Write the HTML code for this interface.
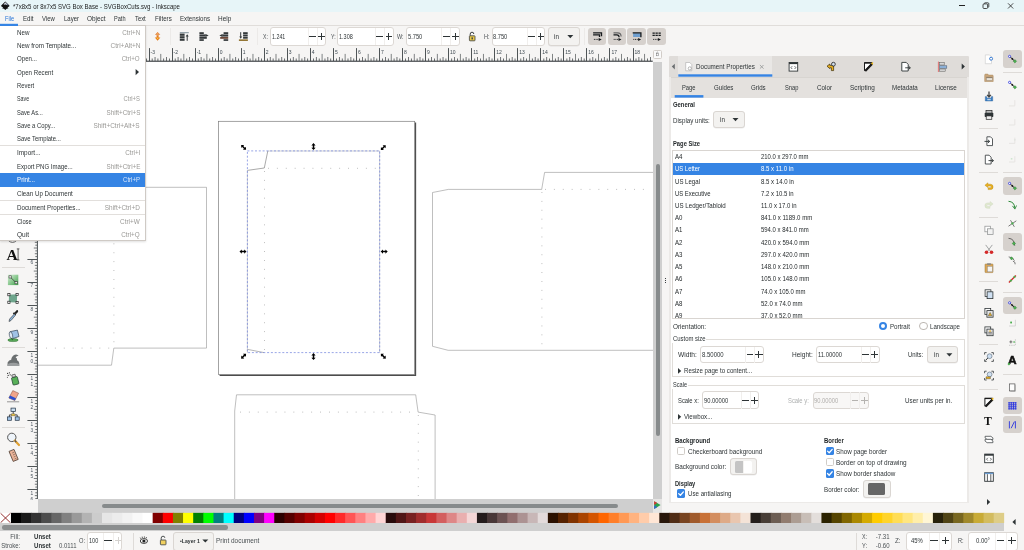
<!DOCTYPE html>
<html lang="en"><head><meta charset="utf-8"><title>Inkscape</title>
<style>
*{box-sizing:border-box;margin:0;padding:0}
html,body{width:1024px;height:550px;overflow:hidden}
body{position:relative;background:#f6f5f4;font-family:"Liberation Sans",sans-serif;font-size:6.4px;color:#2e3436}
div,span.t,svg{position:absolute}
span.t{white-space:nowrap;line-height:10px;height:10px;display:block}
.fld{background:#fff;border:0.6px solid #dcd8d4;border-radius:3px}
.btn{background:#f3f2f0;border:0.6px solid #dad6d2;border-radius:3px;box-shadow:0 0.5px 0.5px rgba(0,0,0,.08)}
.tog{background:#d6d1cd;border-radius:3px}
.hl{background:#3584e4}
#app{left:0;top:0;width:1024px;height:550px;overflow:hidden;will-change:transform}

</style></head>
<body>
<div id="app">
<div style="left:0.00px;top:0.00px;width:1024.00px;height:12.00px;background:#e7f5f8"></div>
<svg style="left:0px;top:1px" width="11" height="11" viewBox="0 0 11 11"><g transform="translate(0.900 0.300)"><path d="M4.4 0.1L8.5 4.2Q8.8 5 7.8 5.4L6.6 6 7.6 7 5.8 7.4 4.4 8.6 3 7.4 1.2 7 2.2 6 1 5.4Q0 5 0.3 4.2Z" fill="#111"/><path d="M4.4 0.9L6.6 3.1 5.6 3.6 4.8 3 4 3.7 3.2 3 2.4 3.4Z" fill="#cfd6e2"/><path d="M5.4 2L7.6 4.2 6.4 3.9Z" fill="#5f76a8"/></g></svg>
<span class="t" id="t0" style="top:1.80px;font-size:6.4px;color:#1c1c1c;left:12.70px;transform-origin:0 50%;transform:scaleX(0.9459);">*7x8x5 or 8x7x5 SVG Box Base - SVGBoxCuts.svg - Inkscape</span>
<div style="left:959.30px;top:5.00px;width:5.60px;height:1.00px;background:#222"></div>
<svg style="left:982px;top:2px" width="9" height="9" viewBox="0 0 9 9"><g transform="translate(0.500 0.300)"><rect x="0.5" y="1.6" width="4.6" height="4.6" rx="1" fill="none" stroke="#222" stroke-width="0.8"/><path d="M1.8 1.4V1.2Q1.8 0.5 2.6 0.5H5.4Q6.3 0.5 6.3 1.4V4.2Q6.3 5 5.4 5" fill="none" stroke="#222" stroke-width="0.8"/></g></svg>
<svg style="left:1007px;top:2px" width="8" height="8" viewBox="0 0 8 8"><g transform="translate(0.600 0.900)"><path d="M0.4 0.4L5.6 5.6M5.6 0.4L0.4 5.6" stroke="#222" stroke-width="0.8" fill="none"/></g></svg>
<div style="left:0.00px;top:12.00px;width:1024.00px;height:13.50px;background:#f6f5f4;border-bottom:0.7px solid #e0ddda"></div>
<span class="t" id="t1" style="top:14.30px;font-size:6.4px;color:#2a76d6;left:4.50px;transform-origin:0 50%;transform:scaleX(0.8970);">File</span>
<span class="t" id="t2" style="top:14.30px;font-size:6.4px;color:#2e3436;left:22.50px;transform-origin:0 50%;transform:scaleX(0.9532);">Edit</span>
<span class="t" id="t3" style="top:14.30px;font-size:6.4px;color:#2e3436;left:41.75px;transform-origin:0 50%;transform:scaleX(0.9273);">View</span>
<span class="t" id="t4" style="top:14.30px;font-size:6.4px;color:#2e3436;left:63.75px;transform-origin:0 50%;transform:scaleX(0.9375);">Layer</span>
<span class="t" id="t5" style="top:14.30px;font-size:6.4px;color:#2e3436;left:87.00px;transform-origin:0 50%;transform:scaleX(1.0008);">Object</span>
<span class="t" id="t6" style="top:14.30px;font-size:6.4px;color:#2e3436;left:114.25px;transform-origin:0 50%;transform:scaleX(0.8741);">Path</span>
<span class="t" id="t7" style="top:14.30px;font-size:6.4px;color:#2e3436;left:135.00px;transform-origin:0 50%;transform:scaleX(0.9161);">Text</span>
<span class="t" id="t8" style="top:14.30px;font-size:6.4px;color:#2e3436;left:154.50px;transform-origin:0 50%;transform:scaleX(0.9623);">Filters</span>
<span class="t" id="t9" style="top:14.30px;font-size:6.4px;color:#2e3436;left:179.50px;transform-origin:0 50%;transform:scaleX(0.9595);">Extensions</span>
<span class="t" id="t10" style="top:14.30px;font-size:6.4px;color:#2e3436;left:218.00px;transform-origin:0 50%;transform:scaleX(1.0071);">Help</span>
<svg style="left:154px;top:32px" width="8" height="10" viewBox="0 0 8 10"><g transform="translate(0.700 0.100)"><path d="M2.9 0.2L5 2.4H3.7V3.6H2.1V2.4H0.8Z" fill="#f0a060" stroke="#d8701c" stroke-width="0.5"/><path d="M2.9 8.6L0.1 5.4H1.9V3.8H3.9V5.4H5.7Z" fill="#e67a1c"/><circle cx="2.9" cy="6.2" r="0.8" fill="#f7d23a"/></g></svg>
<div style="left:170.00px;top:28.00px;width:1.00px;height:17.00px;background:#eceae8"></div>
<svg style="left:179px;top:32px" width="12" height="11" viewBox="0 0 12 11"><g transform="translate(0.800 0.200)"><rect x="0" y="0" width="9" height="1" fill="#7e8f9a"/><rect x="0" y="1.4" width="4.8" height="2.2" fill="#33383a"/><rect x="0" y="4" width="4.8" height="2.1" fill="#33383a"/><rect x="0" y="6.5" width="4.8" height="2.1" fill="#33383a"/><path d="M7.4 8.6V3.2" stroke="#33383a" stroke-width="1"/><path d="M5.9 4.4L7.4 2 8.9 4.4Z" fill="#33383a"/></g></svg>
<svg style="left:199px;top:32px" width="11" height="11" viewBox="0 0 11 11"><g transform="translate(0.400 0.200)"><rect x="0" y="0" width="4.4" height="1.8" fill="#33383a"/><rect x="0" y="2.2" width="6.4" height="2.2" fill="#33383a"/><rect x="0" y="4.8" width="7.4" height="1.8" fill="#33383a"/><rect x="0" y="7" width="4.4" height="1.7" fill="#33383a"/><path d="M6.2 1.8L9.2 3.3 6.2 4.8Z" fill="#33383a"/></g></svg>
<svg style="left:219px;top:32px" width="11" height="11" viewBox="0 0 11 11"><g transform="translate(0.400 0.200)"><rect x="4.2" y="0" width="4.6" height="1.8" fill="#33383a"/><rect x="2.8" y="2.2" width="6" height="2.2" fill="#33383a"/><rect x="0.8" y="4.8" width="8" height="1.8" fill="#6b4636"/><rect x="4.2" y="7" width="4.6" height="1.7" fill="#33383a"/><path d="M3 1.8L0 3.3 3 4.8Z" fill="#33383a"/></g></svg>
<svg style="left:238px;top:32px" width="12" height="11" viewBox="0 0 12 11"><g transform="translate(0.900 0.200)"><rect x="4.2" y="0" width="4.6" height="1.9" fill="#33383a"/><rect x="4.2" y="2.3" width="4.6" height="1.9" fill="#33383a"/><rect x="4.2" y="4.6" width="4.6" height="1.9" fill="#33383a"/><rect x="0" y="7.2" width="9" height="1.5" fill="#8a6a22"/><path d="M1.8 0V5" stroke="#33383a" stroke-width="1"/><path d="M0.4 4.2L1.8 6.6 3.2 4.2Z" fill="#33383a"/></g></svg>
<div style="left:257.00px;top:28.00px;width:1.00px;height:17.00px;background:#eceae8"></div>
<span class="t" id="t11" style="top:32.10px;font-size:6.4px;color:#4c5255;left:262.80px;transform-origin:0 50%;transform:scaleX(0.8000);">X:</span>
<div class="fld" style="left:270.20px;top:27.40px;width:56.20px;height:18.20px;"></div><span class="t" id="t12" style="top:32.00px;font-size:6.4px;color:#2e3436;left:271.90px;transform-origin:0 50%;transform:scaleX(0.8313);">1.241</span><div style="left:308.00px;top:28.00px;width:1.00px;height:17.00px;background:#f1efed"></div><div style="left:317.00px;top:28.00px;width:1.00px;height:17.00px;background:#f1efed"></div><div style="left:309.00px;top:36.00px;width:7.00px;height:1.00px;background:#2e3436"></div><div style="left:318.30px;top:36.00px;width:6.50px;height:1.00px;background:#2e3436"></div><div style="left:321.00px;top:33.25px;width:1.00px;height:6.50px;background:#2e3436"></div>
<span class="t" id="t13" style="top:32.10px;font-size:6.4px;color:#4c5255;left:330.50px;transform-origin:0 50%;transform:scaleX(0.8088);">Y:</span>
<div class="fld" style="left:337.30px;top:27.40px;width:56.30px;height:18.20px;"></div><span class="t" id="t14" style="top:32.00px;font-size:6.4px;color:#2e3436;left:339.20px;transform-origin:0 50%;transform:scaleX(0.8625);">1.308</span><div style="left:375.00px;top:28.00px;width:1.00px;height:17.00px;background:#f1efed"></div><div style="left:384.00px;top:28.00px;width:1.00px;height:17.00px;background:#f1efed"></div><div style="left:376.30px;top:36.00px;width:6.90px;height:1.00px;background:#2e3436"></div><div style="left:385.50px;top:36.00px;width:6.50px;height:1.00px;background:#2e3436"></div><div style="left:388.00px;top:33.25px;width:1.00px;height:6.50px;background:#2e3436"></div>
<span class="t" id="t15" style="top:32.10px;font-size:6.4px;color:#4c5255;left:397.30px;transform-origin:0 50%;transform:scaleX(0.8568);">W:</span>
<div class="fld" style="left:406.40px;top:27.40px;width:53.20px;height:18.20px;"></div><span class="t" id="t16" style="top:32.00px;font-size:6.4px;color:#2e3436;left:408.00px;transform-origin:0 50%;transform:scaleX(0.8875);">5.750</span><div style="left:441.00px;top:28.00px;width:1.00px;height:17.00px;background:#f1efed"></div><div style="left:450.00px;top:28.00px;width:1.00px;height:17.00px;background:#f1efed"></div><div style="left:442.50px;top:36.00px;width:7.10px;height:1.00px;background:#2e3436"></div><div style="left:452.00px;top:36.00px;width:6.60px;height:1.00px;background:#2e3436"></div><div style="left:455.00px;top:33.20px;width:1.00px;height:6.60px;background:#2e3436"></div>
<svg style="left:468px;top:31px" width="9" height="12" viewBox="0 0 9 12"><g transform="translate(0.600 0.600)"><path d="M1.6 4.2V2.6Q1.6 0.6 3.4 0.6Q5.2 0.6 5.2 2.4" fill="none" stroke="#3a3f41" stroke-width="1"/><rect x="0.8" y="4.2" width="5.6" height="5" rx="0.6" fill="#e9c84a" stroke="#3a3f41" stroke-width="0.8"/><rect x="2.9" y="5.8" width="1.4" height="2" fill="#3a3f41"/></g></svg>
<span class="t" id="t17" style="top:32.10px;font-size:6.4px;color:#4c5255;left:483.80px;transform-origin:0 50%;transform:scaleX(0.8741);">H:</span>
<div class="fld" style="left:491.60px;top:27.40px;width:53.80px;height:18.20px;"></div><span class="t" id="t18" style="top:32.00px;font-size:6.4px;color:#2e3436;left:493.20px;transform-origin:0 50%;transform:scaleX(0.8875);">8.750</span><div style="left:527.00px;top:28.00px;width:1.00px;height:17.00px;background:#f1efed"></div><div style="left:536.00px;top:28.00px;width:1.00px;height:17.00px;background:#f1efed"></div><div style="left:528.30px;top:36.00px;width:6.90px;height:1.00px;background:#2e3436"></div><div style="left:537.60px;top:36.00px;width:6.60px;height:1.00px;background:#2e3436"></div><div style="left:540.00px;top:33.20px;width:1.00px;height:6.60px;background:#2e3436"></div>
<div class="btn" style="left:548.00px;top:27.40px;width:31.60px;height:18.20px;"></div><span class="t" id="t19" style="top:32.00px;font-size:6.4px;color:#2e3436;left:554.20px;transform-origin:0 50%;transform:scaleX(0.9700);">in</span><svg style="left:567px;top:35px" width="8" height="5" viewBox="0 0 8 5"><g transform="translate(0.300 0.100)"><path d="M0 0H6L3.0 3.2Z" fill="#2e3436"/></g></svg>
<div style="left:584.00px;top:28.00px;width:1.00px;height:17.00px;background:#eceae8"></div>
<div class="tog" style="left:588.00px;top:27.80px;width:18.40px;height:17.70px;"></div>
<svg style="left:593px;top:32px" width="11" height="11" viewBox="0 0 11 11"><g transform="translate(0.100 0.200)"><path d="M0 0.7H8.4V4M0 2.7H6.4V4.8" fill="none" stroke="#15191b" stroke-width="1.3"/><path d="M0.8 7.2H6" stroke="#15191b" stroke-width="0.9" stroke-dasharray="1 0.7"/><path d="M5.6 5.7L8.6 7.2 5.6 8.7Z" fill="#15191b"/></g></svg>
<div class="tog" style="left:607.80px;top:27.80px;width:18.30px;height:17.70px;"></div>
<svg style="left:612px;top:32px" width="11" height="11" viewBox="0 0 11 11"><g transform="translate(0.900 0.200)"><path d="M0.6 0.7H4.6Q8.2 0.7 8.2 4.4" fill="none" stroke="#666" stroke-width="1.2"/><path d="M0.6 2.7H4Q6.2 2.7 6.2 5" fill="none" stroke="#15191b" stroke-width="1.2"/><path d="M0.8 7.2H6" stroke="#15191b" stroke-width="0.9" stroke-dasharray="1 0.7"/><path d="M5.6 5.7L8.6 7.2 5.6 8.7Z" fill="#15191b"/></g></svg>
<div class="tog" style="left:627.40px;top:27.80px;width:18.50px;height:17.70px;"></div>
<svg style="left:632px;top:32px" width="11" height="11" viewBox="0 0 11 11"><g transform="translate(0.500 0.200)"><rect x="0.6" y="1" width="7.6" height="3.8" fill="#6f9fd0"/><path d="M0.2 0.7H8.4V5" fill="none" stroke="#15191b" stroke-width="1.3"/><path d="M0.8 7.2H6" stroke="#15191b" stroke-width="0.9" stroke-dasharray="1 0.7"/><path d="M5.6 5.7L8.6 7.2 5.6 8.7Z" fill="#15191b"/></g></svg>
<div class="tog" style="left:647.20px;top:27.80px;width:18.60px;height:17.70px;"></div>
<svg style="left:652px;top:32px" width="11" height="11" viewBox="0 0 11 11"><g transform="translate(0.300 0.200)"><path d="M0.2 0.9H8.8M0.2 3.2H8.8" stroke="#15191b" stroke-width="1.4" stroke-dasharray="2.3 0.7"/><path d="M0.8 7.2H6" stroke="#15191b" stroke-width="0.9" stroke-dasharray="1 0.7"/><path d="M5.6 5.7L8.6 7.2 5.6 8.7Z" fill="#15191b"/></g></svg>
<div style="left:38.00px;top:61.60px;width:615.20px;height:437.40px;background:#fff"></div>
<svg style="left:24px;top:47px" width="631" height="16" viewBox="0 0 631 16"><g transform="translate(0.500 0.500)"><rect x="14.94" y="9.50" width="0.8" height="4.1" fill="#3d4346" opacity="0.9"/><rect x="17.82" y="11.00" width="0.8" height="2.6" fill="#3d4346" opacity="0.95"/><rect x="20.70" y="6.40" width="0.8" height="7.2" fill="#3d4346" opacity="0.8"/><rect x="23.58" y="11.00" width="0.8" height="2.6" fill="#3d4346" opacity="0.95"/><rect x="26.46" y="9.50" width="0.8" height="4.1" fill="#3d4346" opacity="0.9"/><rect x="29.34" y="11.00" width="0.8" height="2.6" fill="#3d4346" opacity="0.95"/><rect x="32.55" y="0.60" width="0.9" height="13.0" fill="#3d4346" opacity="1"/><rect x="35.10" y="11.00" width="0.8" height="2.6" fill="#3d4346" opacity="0.95"/><rect x="37.98" y="9.50" width="0.8" height="4.1" fill="#3d4346" opacity="0.9"/><rect x="40.86" y="11.00" width="0.8" height="2.6" fill="#3d4346" opacity="0.95"/><rect x="43.74" y="6.40" width="0.8" height="7.2" fill="#3d4346" opacity="0.8"/><rect x="46.62" y="11.00" width="0.8" height="2.6" fill="#3d4346" opacity="0.95"/><rect x="49.50" y="9.50" width="0.8" height="4.1" fill="#3d4346" opacity="0.9"/><rect x="52.38" y="11.00" width="0.8" height="2.6" fill="#3d4346" opacity="0.95"/><rect x="55.55" y="0.60" width="0.9" height="13.0" fill="#3d4346" opacity="1"/><rect x="58.14" y="11.00" width="0.8" height="2.6" fill="#3d4346" opacity="0.95"/><rect x="61.02" y="9.50" width="0.8" height="4.1" fill="#3d4346" opacity="0.9"/><rect x="63.90" y="11.00" width="0.8" height="2.6" fill="#3d4346" opacity="0.95"/><rect x="66.78" y="6.40" width="0.8" height="7.2" fill="#3d4346" opacity="0.8"/><rect x="69.66" y="11.00" width="0.8" height="2.6" fill="#3d4346" opacity="0.95"/><rect x="72.54" y="9.50" width="0.8" height="4.1" fill="#3d4346" opacity="0.9"/><rect x="75.42" y="11.00" width="0.8" height="2.6" fill="#3d4346" opacity="0.95"/><rect x="78.55" y="0.60" width="0.9" height="13.0" fill="#3d4346" opacity="1"/><rect x="81.18" y="11.00" width="0.8" height="2.6" fill="#3d4346" opacity="0.95"/><rect x="84.06" y="9.50" width="0.8" height="4.1" fill="#3d4346" opacity="0.9"/><rect x="86.94" y="11.00" width="0.8" height="2.6" fill="#3d4346" opacity="0.95"/><rect x="89.82" y="6.40" width="0.8" height="7.2" fill="#3d4346" opacity="0.8"/><rect x="92.70" y="11.00" width="0.8" height="2.6" fill="#3d4346" opacity="0.95"/><rect x="95.58" y="9.50" width="0.8" height="4.1" fill="#3d4346" opacity="0.9"/><rect x="98.46" y="11.00" width="0.8" height="2.6" fill="#3d4346" opacity="0.95"/><rect x="101.55" y="0.60" width="0.9" height="13.0" fill="#3d4346" opacity="1"/><rect x="104.22" y="11.00" width="0.8" height="2.6" fill="#3d4346" opacity="0.95"/><rect x="107.10" y="9.50" width="0.8" height="4.1" fill="#3d4346" opacity="0.9"/><rect x="109.98" y="11.00" width="0.8" height="2.6" fill="#3d4346" opacity="0.95"/><rect x="112.86" y="6.40" width="0.8" height="7.2" fill="#3d4346" opacity="0.8"/><rect x="115.74" y="11.00" width="0.8" height="2.6" fill="#3d4346" opacity="0.95"/><rect x="118.62" y="9.50" width="0.8" height="4.1" fill="#3d4346" opacity="0.9"/><rect x="121.50" y="11.00" width="0.8" height="2.6" fill="#3d4346" opacity="0.95"/><rect x="124.55" y="0.60" width="0.9" height="13.0" fill="#3d4346" opacity="1"/><rect x="127.26" y="11.00" width="0.8" height="2.6" fill="#3d4346" opacity="0.95"/><rect x="130.14" y="9.50" width="0.8" height="4.1" fill="#3d4346" opacity="0.9"/><rect x="133.02" y="11.00" width="0.8" height="2.6" fill="#3d4346" opacity="0.95"/><rect x="135.90" y="6.40" width="0.8" height="7.2" fill="#3d4346" opacity="0.8"/><rect x="138.78" y="11.00" width="0.8" height="2.6" fill="#3d4346" opacity="0.95"/><rect x="141.66" y="9.50" width="0.8" height="4.1" fill="#3d4346" opacity="0.9"/><rect x="144.54" y="11.00" width="0.8" height="2.6" fill="#3d4346" opacity="0.95"/><rect x="147.55" y="0.60" width="0.9" height="13.0" fill="#3d4346" opacity="1"/><rect x="150.30" y="11.00" width="0.8" height="2.6" fill="#3d4346" opacity="0.95"/><rect x="153.18" y="9.50" width="0.8" height="4.1" fill="#3d4346" opacity="0.9"/><rect x="156.06" y="11.00" width="0.8" height="2.6" fill="#3d4346" opacity="0.95"/><rect x="158.94" y="6.40" width="0.8" height="7.2" fill="#3d4346" opacity="0.8"/><rect x="161.82" y="11.00" width="0.8" height="2.6" fill="#3d4346" opacity="0.95"/><rect x="164.70" y="9.50" width="0.8" height="4.1" fill="#3d4346" opacity="0.9"/><rect x="167.58" y="11.00" width="0.8" height="2.6" fill="#3d4346" opacity="0.95"/><rect x="170.55" y="0.60" width="0.9" height="13.0" fill="#3d4346" opacity="1"/><rect x="173.34" y="11.00" width="0.8" height="2.6" fill="#3d4346" opacity="0.95"/><rect x="176.22" y="9.50" width="0.8" height="4.1" fill="#3d4346" opacity="0.9"/><rect x="179.10" y="11.00" width="0.8" height="2.6" fill="#3d4346" opacity="0.95"/><rect x="181.98" y="6.40" width="0.8" height="7.2" fill="#3d4346" opacity="0.8"/><rect x="184.86" y="11.00" width="0.8" height="2.6" fill="#3d4346" opacity="0.95"/><rect x="187.74" y="9.50" width="0.8" height="4.1" fill="#3d4346" opacity="0.9"/><rect x="190.62" y="11.00" width="0.8" height="2.6" fill="#3d4346" opacity="0.95"/><rect x="193.55" y="0.60" width="0.9" height="13.0" fill="#3d4346" opacity="1"/><rect x="196.38" y="11.00" width="0.8" height="2.6" fill="#3d4346" opacity="0.95"/><rect x="199.26" y="9.50" width="0.8" height="4.1" fill="#3d4346" opacity="0.9"/><rect x="202.14" y="11.00" width="0.8" height="2.6" fill="#3d4346" opacity="0.95"/><rect x="205.02" y="6.40" width="0.8" height="7.2" fill="#3d4346" opacity="0.8"/><rect x="207.90" y="11.00" width="0.8" height="2.6" fill="#3d4346" opacity="0.95"/><rect x="210.78" y="9.50" width="0.8" height="4.1" fill="#3d4346" opacity="0.9"/><rect x="213.66" y="11.00" width="0.8" height="2.6" fill="#3d4346" opacity="0.95"/><rect x="216.55" y="0.60" width="0.9" height="13.0" fill="#3d4346" opacity="1"/><rect x="219.42" y="11.00" width="0.8" height="2.6" fill="#3d4346" opacity="0.95"/><rect x="222.30" y="9.50" width="0.8" height="4.1" fill="#3d4346" opacity="0.9"/><rect x="225.18" y="11.00" width="0.8" height="2.6" fill="#3d4346" opacity="0.95"/><rect x="228.06" y="6.40" width="0.8" height="7.2" fill="#3d4346" opacity="0.8"/><rect x="230.94" y="11.00" width="0.8" height="2.6" fill="#3d4346" opacity="0.95"/><rect x="233.82" y="9.50" width="0.8" height="4.1" fill="#3d4346" opacity="0.9"/><rect x="236.70" y="11.00" width="0.8" height="2.6" fill="#3d4346" opacity="0.95"/><rect x="239.55" y="0.60" width="0.9" height="13.0" fill="#3d4346" opacity="1"/><rect x="242.46" y="11.00" width="0.8" height="2.6" fill="#3d4346" opacity="0.95"/><rect x="245.34" y="9.50" width="0.8" height="4.1" fill="#3d4346" opacity="0.9"/><rect x="248.22" y="11.00" width="0.8" height="2.6" fill="#3d4346" opacity="0.95"/><rect x="251.10" y="6.40" width="0.8" height="7.2" fill="#3d4346" opacity="0.8"/><rect x="253.98" y="11.00" width="0.8" height="2.6" fill="#3d4346" opacity="0.95"/><rect x="256.86" y="9.50" width="0.8" height="4.1" fill="#3d4346" opacity="0.9"/><rect x="259.74" y="11.00" width="0.8" height="2.6" fill="#3d4346" opacity="0.95"/><rect x="262.55" y="0.60" width="0.9" height="13.0" fill="#3d4346" opacity="1"/><rect x="265.50" y="11.00" width="0.8" height="2.6" fill="#3d4346" opacity="0.95"/><rect x="268.38" y="9.50" width="0.8" height="4.1" fill="#3d4346" opacity="0.9"/><rect x="271.26" y="11.00" width="0.8" height="2.6" fill="#3d4346" opacity="0.95"/><rect x="274.14" y="6.40" width="0.8" height="7.2" fill="#3d4346" opacity="0.8"/><rect x="277.02" y="11.00" width="0.8" height="2.6" fill="#3d4346" opacity="0.95"/><rect x="279.90" y="9.50" width="0.8" height="4.1" fill="#3d4346" opacity="0.9"/><rect x="282.78" y="11.00" width="0.8" height="2.6" fill="#3d4346" opacity="0.95"/><rect x="285.55" y="0.60" width="0.9" height="13.0" fill="#3d4346" opacity="1"/><rect x="288.54" y="11.00" width="0.8" height="2.6" fill="#3d4346" opacity="0.95"/><rect x="291.42" y="9.50" width="0.8" height="4.1" fill="#3d4346" opacity="0.9"/><rect x="294.30" y="11.00" width="0.8" height="2.6" fill="#3d4346" opacity="0.95"/><rect x="297.18" y="6.40" width="0.8" height="7.2" fill="#3d4346" opacity="0.8"/><rect x="300.06" y="11.00" width="0.8" height="2.6" fill="#3d4346" opacity="0.95"/><rect x="302.94" y="9.50" width="0.8" height="4.1" fill="#3d4346" opacity="0.9"/><rect x="305.82" y="11.00" width="0.8" height="2.6" fill="#3d4346" opacity="0.95"/><rect x="308.55" y="0.60" width="0.9" height="13.0" fill="#3d4346" opacity="1"/><rect x="311.58" y="11.00" width="0.8" height="2.6" fill="#3d4346" opacity="0.95"/><rect x="314.46" y="9.50" width="0.8" height="4.1" fill="#3d4346" opacity="0.9"/><rect x="317.34" y="11.00" width="0.8" height="2.6" fill="#3d4346" opacity="0.95"/><rect x="320.22" y="6.40" width="0.8" height="7.2" fill="#3d4346" opacity="0.8"/><rect x="323.10" y="11.00" width="0.8" height="2.6" fill="#3d4346" opacity="0.95"/><rect x="325.98" y="9.50" width="0.8" height="4.1" fill="#3d4346" opacity="0.9"/><rect x="328.86" y="11.00" width="0.8" height="2.6" fill="#3d4346" opacity="0.95"/><rect x="331.55" y="0.60" width="0.9" height="13.0" fill="#3d4346" opacity="1"/><rect x="334.62" y="11.00" width="0.8" height="2.6" fill="#3d4346" opacity="0.95"/><rect x="337.50" y="9.50" width="0.8" height="4.1" fill="#3d4346" opacity="0.9"/><rect x="340.38" y="11.00" width="0.8" height="2.6" fill="#3d4346" opacity="0.95"/><rect x="343.26" y="6.40" width="0.8" height="7.2" fill="#3d4346" opacity="0.8"/><rect x="346.14" y="11.00" width="0.8" height="2.6" fill="#3d4346" opacity="0.95"/><rect x="349.02" y="9.50" width="0.8" height="4.1" fill="#3d4346" opacity="0.9"/><rect x="351.90" y="11.00" width="0.8" height="2.6" fill="#3d4346" opacity="0.95"/><rect x="354.55" y="0.60" width="0.9" height="13.0" fill="#3d4346" opacity="1"/><rect x="357.66" y="11.00" width="0.8" height="2.6" fill="#3d4346" opacity="0.95"/><rect x="360.54" y="9.50" width="0.8" height="4.1" fill="#3d4346" opacity="0.9"/><rect x="363.42" y="11.00" width="0.8" height="2.6" fill="#3d4346" opacity="0.95"/><rect x="366.30" y="6.40" width="0.8" height="7.2" fill="#3d4346" opacity="0.8"/><rect x="369.18" y="11.00" width="0.8" height="2.6" fill="#3d4346" opacity="0.95"/><rect x="372.06" y="9.50" width="0.8" height="4.1" fill="#3d4346" opacity="0.9"/><rect x="374.94" y="11.00" width="0.8" height="2.6" fill="#3d4346" opacity="0.95"/><rect x="377.55" y="0.60" width="0.9" height="13.0" fill="#3d4346" opacity="1"/><rect x="380.70" y="11.00" width="0.8" height="2.6" fill="#3d4346" opacity="0.95"/><rect x="383.58" y="9.50" width="0.8" height="4.1" fill="#3d4346" opacity="0.9"/><rect x="386.46" y="11.00" width="0.8" height="2.6" fill="#3d4346" opacity="0.95"/><rect x="389.34" y="6.40" width="0.8" height="7.2" fill="#3d4346" opacity="0.8"/><rect x="392.22" y="11.00" width="0.8" height="2.6" fill="#3d4346" opacity="0.95"/><rect x="395.10" y="9.50" width="0.8" height="4.1" fill="#3d4346" opacity="0.9"/><rect x="397.98" y="11.00" width="0.8" height="2.6" fill="#3d4346" opacity="0.95"/><rect x="400.55" y="0.60" width="0.9" height="13.0" fill="#3d4346" opacity="1"/><rect x="403.74" y="11.00" width="0.8" height="2.6" fill="#3d4346" opacity="0.95"/><rect x="406.62" y="9.50" width="0.8" height="4.1" fill="#3d4346" opacity="0.9"/><rect x="409.50" y="11.00" width="0.8" height="2.6" fill="#3d4346" opacity="0.95"/><rect x="412.38" y="6.40" width="0.8" height="7.2" fill="#3d4346" opacity="0.8"/><rect x="415.26" y="11.00" width="0.8" height="2.6" fill="#3d4346" opacity="0.95"/><rect x="418.14" y="9.50" width="0.8" height="4.1" fill="#3d4346" opacity="0.9"/><rect x="421.02" y="11.00" width="0.8" height="2.6" fill="#3d4346" opacity="0.95"/><rect x="423.55" y="0.60" width="0.9" height="13.0" fill="#3d4346" opacity="1"/><rect x="426.78" y="11.00" width="0.8" height="2.6" fill="#3d4346" opacity="0.95"/><rect x="429.66" y="9.50" width="0.8" height="4.1" fill="#3d4346" opacity="0.9"/><rect x="432.54" y="11.00" width="0.8" height="2.6" fill="#3d4346" opacity="0.95"/><rect x="435.42" y="6.40" width="0.8" height="7.2" fill="#3d4346" opacity="0.8"/><rect x="438.30" y="11.00" width="0.8" height="2.6" fill="#3d4346" opacity="0.95"/><rect x="441.18" y="9.50" width="0.8" height="4.1" fill="#3d4346" opacity="0.9"/><rect x="444.06" y="11.00" width="0.8" height="2.6" fill="#3d4346" opacity="0.95"/><rect x="446.55" y="0.60" width="0.9" height="13.0" fill="#3d4346" opacity="1"/><rect x="449.82" y="11.00" width="0.8" height="2.6" fill="#3d4346" opacity="0.95"/><rect x="452.70" y="9.50" width="0.8" height="4.1" fill="#3d4346" opacity="0.9"/><rect x="455.58" y="11.00" width="0.8" height="2.6" fill="#3d4346" opacity="0.95"/><rect x="458.46" y="6.40" width="0.8" height="7.2" fill="#3d4346" opacity="0.8"/><rect x="461.34" y="11.00" width="0.8" height="2.6" fill="#3d4346" opacity="0.95"/><rect x="464.22" y="9.50" width="0.8" height="4.1" fill="#3d4346" opacity="0.9"/><rect x="467.10" y="11.00" width="0.8" height="2.6" fill="#3d4346" opacity="0.95"/><rect x="469.55" y="0.60" width="0.9" height="13.0" fill="#3d4346" opacity="1"/><rect x="472.86" y="11.00" width="0.8" height="2.6" fill="#3d4346" opacity="0.95"/><rect x="475.74" y="9.50" width="0.8" height="4.1" fill="#3d4346" opacity="0.9"/><rect x="478.62" y="11.00" width="0.8" height="2.6" fill="#3d4346" opacity="0.95"/><rect x="481.50" y="6.40" width="0.8" height="7.2" fill="#3d4346" opacity="0.8"/><rect x="484.38" y="11.00" width="0.8" height="2.6" fill="#3d4346" opacity="0.95"/><rect x="487.26" y="9.50" width="0.8" height="4.1" fill="#3d4346" opacity="0.9"/><rect x="490.14" y="11.00" width="0.8" height="2.6" fill="#3d4346" opacity="0.95"/><rect x="492.55" y="0.60" width="0.9" height="13.0" fill="#3d4346" opacity="1"/><rect x="495.90" y="11.00" width="0.8" height="2.6" fill="#3d4346" opacity="0.95"/><rect x="498.78" y="9.50" width="0.8" height="4.1" fill="#3d4346" opacity="0.9"/><rect x="501.66" y="11.00" width="0.8" height="2.6" fill="#3d4346" opacity="0.95"/><rect x="504.54" y="6.40" width="0.8" height="7.2" fill="#3d4346" opacity="0.8"/><rect x="507.42" y="11.00" width="0.8" height="2.6" fill="#3d4346" opacity="0.95"/><rect x="510.30" y="9.50" width="0.8" height="4.1" fill="#3d4346" opacity="0.9"/><rect x="513.18" y="11.00" width="0.8" height="2.6" fill="#3d4346" opacity="0.95"/><rect x="515.55" y="0.60" width="0.9" height="13.0" fill="#3d4346" opacity="1"/><rect x="518.94" y="11.00" width="0.8" height="2.6" fill="#3d4346" opacity="0.95"/><rect x="521.82" y="9.50" width="0.8" height="4.1" fill="#3d4346" opacity="0.9"/><rect x="524.70" y="11.00" width="0.8" height="2.6" fill="#3d4346" opacity="0.95"/><rect x="527.58" y="6.40" width="0.8" height="7.2" fill="#3d4346" opacity="0.8"/><rect x="530.46" y="11.00" width="0.8" height="2.6" fill="#3d4346" opacity="0.95"/><rect x="533.34" y="9.50" width="0.8" height="4.1" fill="#3d4346" opacity="0.9"/><rect x="536.22" y="11.00" width="0.8" height="2.6" fill="#3d4346" opacity="0.95"/><rect x="538.55" y="0.60" width="0.9" height="13.0" fill="#3d4346" opacity="1"/><rect x="541.98" y="11.00" width="0.8" height="2.6" fill="#3d4346" opacity="0.95"/><rect x="544.86" y="9.50" width="0.8" height="4.1" fill="#3d4346" opacity="0.9"/><rect x="547.74" y="11.00" width="0.8" height="2.6" fill="#3d4346" opacity="0.95"/><rect x="550.62" y="6.40" width="0.8" height="7.2" fill="#3d4346" opacity="0.8"/><rect x="553.50" y="11.00" width="0.8" height="2.6" fill="#3d4346" opacity="0.95"/><rect x="556.38" y="9.50" width="0.8" height="4.1" fill="#3d4346" opacity="0.9"/><rect x="559.26" y="11.00" width="0.8" height="2.6" fill="#3d4346" opacity="0.95"/><rect x="561.55" y="0.60" width="0.9" height="13.0" fill="#3d4346" opacity="1"/><rect x="565.02" y="11.00" width="0.8" height="2.6" fill="#3d4346" opacity="0.95"/><rect x="567.90" y="9.50" width="0.8" height="4.1" fill="#3d4346" opacity="0.9"/><rect x="570.78" y="11.00" width="0.8" height="2.6" fill="#3d4346" opacity="0.95"/><rect x="573.66" y="6.40" width="0.8" height="7.2" fill="#3d4346" opacity="0.8"/><rect x="576.54" y="11.00" width="0.8" height="2.6" fill="#3d4346" opacity="0.95"/><rect x="579.42" y="9.50" width="0.8" height="4.1" fill="#3d4346" opacity="0.9"/><rect x="582.30" y="11.00" width="0.8" height="2.6" fill="#3d4346" opacity="0.95"/><rect x="584.55" y="0.60" width="0.9" height="13.0" fill="#3d4346" opacity="1"/><rect x="588.06" y="11.00" width="0.8" height="2.6" fill="#3d4346" opacity="0.95"/><rect x="590.94" y="9.50" width="0.8" height="4.1" fill="#3d4346" opacity="0.9"/><rect x="593.82" y="11.00" width="0.8" height="2.6" fill="#3d4346" opacity="0.95"/><rect x="596.70" y="6.40" width="0.8" height="7.2" fill="#3d4346" opacity="0.8"/><rect x="599.58" y="11.00" width="0.8" height="2.6" fill="#3d4346" opacity="0.95"/><rect x="602.46" y="9.50" width="0.8" height="4.1" fill="#3d4346" opacity="0.9"/><rect x="605.34" y="11.00" width="0.8" height="2.6" fill="#3d4346" opacity="0.95"/><rect x="608.55" y="0.60" width="0.9" height="13.0" fill="#3d4346" opacity="1"/><rect x="611.10" y="11.00" width="0.8" height="2.6" fill="#3d4346" opacity="0.95"/><rect x="613.98" y="9.50" width="0.8" height="4.1" fill="#3d4346" opacity="0.9"/><rect x="616.86" y="11.00" width="0.8" height="2.6" fill="#3d4346" opacity="0.95"/><rect x="619.74" y="6.40" width="0.8" height="7.2" fill="#3d4346" opacity="0.8"/><rect x="622.62" y="11.00" width="0.8" height="2.6" fill="#3d4346" opacity="0.95"/><rect x="625.50" y="9.50" width="0.8" height="4.1" fill="#3d4346" opacity="0.9"/><rect x="13.50" y="13.15" width="614.70" height="1.15" fill="#3d4346"/><text x="33.92" y="6.3" font-size="5" fill="#3f4a52" font-family="Liberation Sans, sans-serif">-7</text><text x="56.96" y="6.3" font-size="5" fill="#3f4a52" font-family="Liberation Sans, sans-serif">-6</text><text x="80.00" y="6.3" font-size="5" fill="#3f4a52" font-family="Liberation Sans, sans-serif">-5</text><text x="103.04" y="6.3" font-size="5" fill="#3f4a52" font-family="Liberation Sans, sans-serif">-4</text><text x="126.08" y="6.3" font-size="5" fill="#3f4a52" font-family="Liberation Sans, sans-serif">-3</text><text x="149.12" y="6.3" font-size="5" fill="#3f4a52" font-family="Liberation Sans, sans-serif">-2</text><text x="172.16" y="6.3" font-size="5" fill="#3f4a52" font-family="Liberation Sans, sans-serif">-1</text><text x="195.20" y="6.3" font-size="5" fill="#3f4a52" font-family="Liberation Sans, sans-serif">0</text><text x="218.24" y="6.3" font-size="5" fill="#3f4a52" font-family="Liberation Sans, sans-serif">1</text><text x="241.28" y="6.3" font-size="5" fill="#3f4a52" font-family="Liberation Sans, sans-serif">2</text><text x="264.32" y="6.3" font-size="5" fill="#3f4a52" font-family="Liberation Sans, sans-serif">3</text><text x="287.36" y="6.3" font-size="5" fill="#3f4a52" font-family="Liberation Sans, sans-serif">4</text><text x="310.40" y="6.3" font-size="5" fill="#3f4a52" font-family="Liberation Sans, sans-serif">5</text><text x="333.44" y="6.3" font-size="5" fill="#3f4a52" font-family="Liberation Sans, sans-serif">6</text><text x="356.48" y="6.3" font-size="5" fill="#3f4a52" font-family="Liberation Sans, sans-serif">7</text><text x="379.52" y="6.3" font-size="5" fill="#3f4a52" font-family="Liberation Sans, sans-serif">8</text><text x="402.56" y="6.3" font-size="5" fill="#3f4a52" font-family="Liberation Sans, sans-serif">9</text><text x="425.60" y="6.3" font-size="5" fill="#3f4a52" font-family="Liberation Sans, sans-serif">10</text><text x="448.64" y="6.3" font-size="5" fill="#3f4a52" font-family="Liberation Sans, sans-serif">11</text><text x="471.68" y="6.3" font-size="5" fill="#3f4a52" font-family="Liberation Sans, sans-serif">12</text><text x="494.72" y="6.3" font-size="5" fill="#3f4a52" font-family="Liberation Sans, sans-serif">13</text><text x="517.76" y="6.3" font-size="5" fill="#3f4a52" font-family="Liberation Sans, sans-serif">14</text><text x="540.80" y="6.3" font-size="5" fill="#3f4a52" font-family="Liberation Sans, sans-serif">15</text><text x="563.84" y="6.3" font-size="5" fill="#3f4a52" font-family="Liberation Sans, sans-serif">16</text><text x="586.88" y="6.3" font-size="5" fill="#3f4a52" font-family="Liberation Sans, sans-serif">17</text><text x="609.92" y="6.3" font-size="5" fill="#3f4a52" font-family="Liberation Sans, sans-serif">18</text></g></svg>
<svg style="left:24px;top:61px" width="15" height="439" viewBox="0 0 15 439"><g transform="translate(0.000 0.600)"><rect x="9.80" y="1.70" width="3.2" height="0.8" fill="#3d4346" opacity="0.85"/><rect x="11.30" y="4.58" width="1.7" height="0.8" fill="#3d4346" opacity="0.9"/><rect x="10.80" y="7.46" width="2.2" height="0.8" fill="#3d4346" opacity="0.9"/><rect x="11.30" y="10.34" width="1.7" height="0.8" fill="#3d4346" opacity="0.9"/><rect x="3.40" y="13.45" width="9.6" height="0.9" fill="#3d4346" opacity="1"/><rect x="11.30" y="16.10" width="1.7" height="0.8" fill="#3d4346" opacity="0.9"/><rect x="10.80" y="18.98" width="2.2" height="0.8" fill="#3d4346" opacity="0.9"/><rect x="11.30" y="21.86" width="1.7" height="0.8" fill="#3d4346" opacity="0.9"/><rect x="9.80" y="24.74" width="3.2" height="0.8" fill="#3d4346" opacity="0.85"/><rect x="11.30" y="27.62" width="1.7" height="0.8" fill="#3d4346" opacity="0.9"/><rect x="10.80" y="30.50" width="2.2" height="0.8" fill="#3d4346" opacity="0.9"/><rect x="11.30" y="33.38" width="1.7" height="0.8" fill="#3d4346" opacity="0.9"/><rect x="3.40" y="36.45" width="9.6" height="0.9" fill="#3d4346" opacity="1"/><rect x="11.30" y="39.14" width="1.7" height="0.8" fill="#3d4346" opacity="0.9"/><rect x="10.80" y="42.02" width="2.2" height="0.8" fill="#3d4346" opacity="0.9"/><rect x="11.30" y="44.90" width="1.7" height="0.8" fill="#3d4346" opacity="0.9"/><rect x="9.80" y="47.78" width="3.2" height="0.8" fill="#3d4346" opacity="0.85"/><rect x="11.30" y="50.66" width="1.7" height="0.8" fill="#3d4346" opacity="0.9"/><rect x="10.80" y="53.54" width="2.2" height="0.8" fill="#3d4346" opacity="0.9"/><rect x="11.30" y="56.42" width="1.7" height="0.8" fill="#3d4346" opacity="0.9"/><rect x="3.40" y="59.45" width="9.6" height="0.9" fill="#3d4346" opacity="1"/><rect x="11.30" y="62.18" width="1.7" height="0.8" fill="#3d4346" opacity="0.9"/><rect x="10.80" y="65.06" width="2.2" height="0.8" fill="#3d4346" opacity="0.9"/><rect x="11.30" y="67.94" width="1.7" height="0.8" fill="#3d4346" opacity="0.9"/><rect x="9.80" y="70.82" width="3.2" height="0.8" fill="#3d4346" opacity="0.85"/><rect x="11.30" y="73.70" width="1.7" height="0.8" fill="#3d4346" opacity="0.9"/><rect x="10.80" y="76.58" width="2.2" height="0.8" fill="#3d4346" opacity="0.9"/><rect x="11.30" y="79.46" width="1.7" height="0.8" fill="#3d4346" opacity="0.9"/><rect x="3.40" y="82.45" width="9.6" height="0.9" fill="#3d4346" opacity="1"/><rect x="11.30" y="85.22" width="1.7" height="0.8" fill="#3d4346" opacity="0.9"/><rect x="10.80" y="88.10" width="2.2" height="0.8" fill="#3d4346" opacity="0.9"/><rect x="11.30" y="90.98" width="1.7" height="0.8" fill="#3d4346" opacity="0.9"/><rect x="9.80" y="93.86" width="3.2" height="0.8" fill="#3d4346" opacity="0.85"/><rect x="11.30" y="96.74" width="1.7" height="0.8" fill="#3d4346" opacity="0.9"/><rect x="10.80" y="99.62" width="2.2" height="0.8" fill="#3d4346" opacity="0.9"/><rect x="11.30" y="102.50" width="1.7" height="0.8" fill="#3d4346" opacity="0.9"/><rect x="3.40" y="105.45" width="9.6" height="0.9" fill="#3d4346" opacity="1"/><rect x="11.30" y="108.26" width="1.7" height="0.8" fill="#3d4346" opacity="0.9"/><rect x="10.80" y="111.14" width="2.2" height="0.8" fill="#3d4346" opacity="0.9"/><rect x="11.30" y="114.02" width="1.7" height="0.8" fill="#3d4346" opacity="0.9"/><rect x="9.80" y="116.90" width="3.2" height="0.8" fill="#3d4346" opacity="0.85"/><rect x="11.30" y="119.78" width="1.7" height="0.8" fill="#3d4346" opacity="0.9"/><rect x="10.80" y="122.66" width="2.2" height="0.8" fill="#3d4346" opacity="0.9"/><rect x="11.30" y="125.54" width="1.7" height="0.8" fill="#3d4346" opacity="0.9"/><rect x="3.40" y="128.45" width="9.6" height="0.9" fill="#3d4346" opacity="1"/><rect x="11.30" y="131.30" width="1.7" height="0.8" fill="#3d4346" opacity="0.9"/><rect x="10.80" y="134.18" width="2.2" height="0.8" fill="#3d4346" opacity="0.9"/><rect x="11.30" y="137.06" width="1.7" height="0.8" fill="#3d4346" opacity="0.9"/><rect x="9.80" y="139.94" width="3.2" height="0.8" fill="#3d4346" opacity="0.85"/><rect x="11.30" y="142.82" width="1.7" height="0.8" fill="#3d4346" opacity="0.9"/><rect x="10.80" y="145.70" width="2.2" height="0.8" fill="#3d4346" opacity="0.9"/><rect x="11.30" y="148.58" width="1.7" height="0.8" fill="#3d4346" opacity="0.9"/><rect x="3.40" y="151.45" width="9.6" height="0.9" fill="#3d4346" opacity="1"/><rect x="11.30" y="154.34" width="1.7" height="0.8" fill="#3d4346" opacity="0.9"/><rect x="10.80" y="157.22" width="2.2" height="0.8" fill="#3d4346" opacity="0.9"/><rect x="11.30" y="160.10" width="1.7" height="0.8" fill="#3d4346" opacity="0.9"/><rect x="9.80" y="162.98" width="3.2" height="0.8" fill="#3d4346" opacity="0.85"/><rect x="11.30" y="165.86" width="1.7" height="0.8" fill="#3d4346" opacity="0.9"/><rect x="10.80" y="168.74" width="2.2" height="0.8" fill="#3d4346" opacity="0.9"/><rect x="11.30" y="171.62" width="1.7" height="0.8" fill="#3d4346" opacity="0.9"/><rect x="3.40" y="174.45" width="9.6" height="0.9" fill="#3d4346" opacity="1"/><rect x="11.30" y="177.38" width="1.7" height="0.8" fill="#3d4346" opacity="0.9"/><rect x="10.80" y="180.26" width="2.2" height="0.8" fill="#3d4346" opacity="0.9"/><rect x="11.30" y="183.14" width="1.7" height="0.8" fill="#3d4346" opacity="0.9"/><rect x="9.80" y="186.02" width="3.2" height="0.8" fill="#3d4346" opacity="0.85"/><rect x="11.30" y="188.90" width="1.7" height="0.8" fill="#3d4346" opacity="0.9"/><rect x="10.80" y="191.78" width="2.2" height="0.8" fill="#3d4346" opacity="0.9"/><rect x="11.30" y="194.66" width="1.7" height="0.8" fill="#3d4346" opacity="0.9"/><rect x="3.40" y="197.45" width="9.6" height="0.9" fill="#3d4346" opacity="1"/><rect x="11.30" y="200.42" width="1.7" height="0.8" fill="#3d4346" opacity="0.9"/><rect x="10.80" y="203.30" width="2.2" height="0.8" fill="#3d4346" opacity="0.9"/><rect x="11.30" y="206.18" width="1.7" height="0.8" fill="#3d4346" opacity="0.9"/><rect x="9.80" y="209.06" width="3.2" height="0.8" fill="#3d4346" opacity="0.85"/><rect x="11.30" y="211.94" width="1.7" height="0.8" fill="#3d4346" opacity="0.9"/><rect x="10.80" y="214.82" width="2.2" height="0.8" fill="#3d4346" opacity="0.9"/><rect x="11.30" y="217.70" width="1.7" height="0.8" fill="#3d4346" opacity="0.9"/><rect x="3.40" y="220.45" width="9.6" height="0.9" fill="#3d4346" opacity="1"/><rect x="11.30" y="223.46" width="1.7" height="0.8" fill="#3d4346" opacity="0.9"/><rect x="10.80" y="226.34" width="2.2" height="0.8" fill="#3d4346" opacity="0.9"/><rect x="11.30" y="229.22" width="1.7" height="0.8" fill="#3d4346" opacity="0.9"/><rect x="9.80" y="232.10" width="3.2" height="0.8" fill="#3d4346" opacity="0.85"/><rect x="11.30" y="234.98" width="1.7" height="0.8" fill="#3d4346" opacity="0.9"/><rect x="10.80" y="237.86" width="2.2" height="0.8" fill="#3d4346" opacity="0.9"/><rect x="11.30" y="240.74" width="1.7" height="0.8" fill="#3d4346" opacity="0.9"/><rect x="3.40" y="243.45" width="9.6" height="0.9" fill="#3d4346" opacity="1"/><rect x="11.30" y="246.50" width="1.7" height="0.8" fill="#3d4346" opacity="0.9"/><rect x="10.80" y="249.38" width="2.2" height="0.8" fill="#3d4346" opacity="0.9"/><rect x="11.30" y="252.26" width="1.7" height="0.8" fill="#3d4346" opacity="0.9"/><rect x="9.80" y="255.14" width="3.2" height="0.8" fill="#3d4346" opacity="0.85"/><rect x="11.30" y="258.02" width="1.7" height="0.8" fill="#3d4346" opacity="0.9"/><rect x="10.80" y="260.90" width="2.2" height="0.8" fill="#3d4346" opacity="0.9"/><rect x="11.30" y="263.78" width="1.7" height="0.8" fill="#3d4346" opacity="0.9"/><rect x="3.40" y="266.45" width="9.6" height="0.9" fill="#3d4346" opacity="1"/><rect x="11.30" y="269.54" width="1.7" height="0.8" fill="#3d4346" opacity="0.9"/><rect x="10.80" y="272.42" width="2.2" height="0.8" fill="#3d4346" opacity="0.9"/><rect x="11.30" y="275.30" width="1.7" height="0.8" fill="#3d4346" opacity="0.9"/><rect x="9.80" y="278.18" width="3.2" height="0.8" fill="#3d4346" opacity="0.85"/><rect x="11.30" y="281.06" width="1.7" height="0.8" fill="#3d4346" opacity="0.9"/><rect x="10.80" y="283.94" width="2.2" height="0.8" fill="#3d4346" opacity="0.9"/><rect x="11.30" y="286.82" width="1.7" height="0.8" fill="#3d4346" opacity="0.9"/><rect x="3.40" y="289.45" width="9.6" height="0.9" fill="#3d4346" opacity="1"/><rect x="11.30" y="292.58" width="1.7" height="0.8" fill="#3d4346" opacity="0.9"/><rect x="10.80" y="295.46" width="2.2" height="0.8" fill="#3d4346" opacity="0.9"/><rect x="11.30" y="298.34" width="1.7" height="0.8" fill="#3d4346" opacity="0.9"/><rect x="9.80" y="301.22" width="3.2" height="0.8" fill="#3d4346" opacity="0.85"/><rect x="11.30" y="304.10" width="1.7" height="0.8" fill="#3d4346" opacity="0.9"/><rect x="10.80" y="306.98" width="2.2" height="0.8" fill="#3d4346" opacity="0.9"/><rect x="11.30" y="309.86" width="1.7" height="0.8" fill="#3d4346" opacity="0.9"/><rect x="3.40" y="312.45" width="9.6" height="0.9" fill="#3d4346" opacity="1"/><rect x="11.30" y="315.62" width="1.7" height="0.8" fill="#3d4346" opacity="0.9"/><rect x="10.80" y="318.50" width="2.2" height="0.8" fill="#3d4346" opacity="0.9"/><rect x="11.30" y="321.38" width="1.7" height="0.8" fill="#3d4346" opacity="0.9"/><rect x="9.80" y="324.26" width="3.2" height="0.8" fill="#3d4346" opacity="0.85"/><rect x="11.30" y="327.14" width="1.7" height="0.8" fill="#3d4346" opacity="0.9"/><rect x="10.80" y="330.02" width="2.2" height="0.8" fill="#3d4346" opacity="0.9"/><rect x="11.30" y="332.90" width="1.7" height="0.8" fill="#3d4346" opacity="0.9"/><rect x="3.40" y="335.45" width="9.6" height="0.9" fill="#3d4346" opacity="1"/><rect x="11.30" y="338.66" width="1.7" height="0.8" fill="#3d4346" opacity="0.9"/><rect x="10.80" y="341.54" width="2.2" height="0.8" fill="#3d4346" opacity="0.9"/><rect x="11.30" y="344.42" width="1.7" height="0.8" fill="#3d4346" opacity="0.9"/><rect x="9.80" y="347.30" width="3.2" height="0.8" fill="#3d4346" opacity="0.85"/><rect x="11.30" y="350.18" width="1.7" height="0.8" fill="#3d4346" opacity="0.9"/><rect x="10.80" y="353.06" width="2.2" height="0.8" fill="#3d4346" opacity="0.9"/><rect x="11.30" y="355.94" width="1.7" height="0.8" fill="#3d4346" opacity="0.9"/><rect x="3.40" y="358.45" width="9.6" height="0.9" fill="#3d4346" opacity="1"/><rect x="11.30" y="361.70" width="1.7" height="0.8" fill="#3d4346" opacity="0.9"/><rect x="10.80" y="364.58" width="2.2" height="0.8" fill="#3d4346" opacity="0.9"/><rect x="11.30" y="367.46" width="1.7" height="0.8" fill="#3d4346" opacity="0.9"/><rect x="9.80" y="370.34" width="3.2" height="0.8" fill="#3d4346" opacity="0.85"/><rect x="11.30" y="373.22" width="1.7" height="0.8" fill="#3d4346" opacity="0.9"/><rect x="10.80" y="376.10" width="2.2" height="0.8" fill="#3d4346" opacity="0.9"/><rect x="11.30" y="378.98" width="1.7" height="0.8" fill="#3d4346" opacity="0.9"/><rect x="3.40" y="381.45" width="9.6" height="0.9" fill="#3d4346" opacity="1"/><rect x="11.30" y="384.74" width="1.7" height="0.8" fill="#3d4346" opacity="0.9"/><rect x="10.80" y="387.62" width="2.2" height="0.8" fill="#3d4346" opacity="0.9"/><rect x="11.30" y="390.50" width="1.7" height="0.8" fill="#3d4346" opacity="0.9"/><rect x="9.80" y="393.38" width="3.2" height="0.8" fill="#3d4346" opacity="0.85"/><rect x="11.30" y="396.26" width="1.7" height="0.8" fill="#3d4346" opacity="0.9"/><rect x="10.80" y="399.14" width="2.2" height="0.8" fill="#3d4346" opacity="0.9"/><rect x="11.30" y="402.02" width="1.7" height="0.8" fill="#3d4346" opacity="0.9"/><rect x="3.40" y="404.45" width="9.6" height="0.9" fill="#3d4346" opacity="1"/><rect x="11.30" y="407.78" width="1.7" height="0.8" fill="#3d4346" opacity="0.9"/><rect x="10.80" y="410.66" width="2.2" height="0.8" fill="#3d4346" opacity="0.9"/><rect x="11.30" y="413.54" width="1.7" height="0.8" fill="#3d4346" opacity="0.9"/><rect x="9.80" y="416.42" width="3.2" height="0.8" fill="#3d4346" opacity="0.85"/><rect x="11.30" y="419.30" width="1.7" height="0.8" fill="#3d4346" opacity="0.9"/><rect x="10.80" y="422.18" width="2.2" height="0.8" fill="#3d4346" opacity="0.9"/><rect x="11.30" y="425.06" width="1.7" height="0.8" fill="#3d4346" opacity="0.9"/><rect x="3.40" y="427.45" width="9.6" height="0.9" fill="#3d4346" opacity="1"/><rect x="11.30" y="430.82" width="1.7" height="0.8" fill="#3d4346" opacity="0.9"/><rect x="10.80" y="433.70" width="2.2" height="0.8" fill="#3d4346" opacity="0.9"/><rect x="11.30" y="436.58" width="1.7" height="0.8" fill="#3d4346" opacity="0.9"/><rect x="12.9" y="0" width="1.0" height="437.40" fill="#4a5053"/><text x="6.6" y="18.52" font-size="4.8" fill="#4a5560" font-family="Liberation Sans, sans-serif">-</text><text x="6.6" y="24.52" font-size="4.8" fill="#4a5560" font-family="Liberation Sans, sans-serif">2</text><text x="6.6" y="41.56" font-size="4.8" fill="#4a5560" font-family="Liberation Sans, sans-serif">-</text><text x="6.6" y="47.56" font-size="4.8" fill="#4a5560" font-family="Liberation Sans, sans-serif">1</text><text x="6.6" y="64.60" font-size="4.8" fill="#4a5560" font-family="Liberation Sans, sans-serif">0</text><text x="6.6" y="87.64" font-size="4.8" fill="#4a5560" font-family="Liberation Sans, sans-serif">1</text><text x="6.6" y="110.68" font-size="4.8" fill="#4a5560" font-family="Liberation Sans, sans-serif">2</text><text x="6.6" y="133.72" font-size="4.8" fill="#4a5560" font-family="Liberation Sans, sans-serif">3</text><text x="6.6" y="156.76" font-size="4.8" fill="#4a5560" font-family="Liberation Sans, sans-serif">4</text><text x="6.6" y="179.80" font-size="4.8" fill="#4a5560" font-family="Liberation Sans, sans-serif">5</text><text x="6.6" y="202.84" font-size="4.8" fill="#4a5560" font-family="Liberation Sans, sans-serif">6</text><text x="6.6" y="225.88" font-size="4.8" fill="#4a5560" font-family="Liberation Sans, sans-serif">7</text><text x="6.6" y="248.92" font-size="4.8" fill="#4a5560" font-family="Liberation Sans, sans-serif">8</text><text x="6.6" y="271.96" font-size="4.8" fill="#4a5560" font-family="Liberation Sans, sans-serif">9</text><text x="6.6" y="295.00" font-size="4.8" fill="#4a5560" font-family="Liberation Sans, sans-serif">1</text><text x="6.6" y="301.00" font-size="4.8" fill="#4a5560" font-family="Liberation Sans, sans-serif">0</text><text x="6.6" y="318.04" font-size="4.8" fill="#4a5560" font-family="Liberation Sans, sans-serif">1</text><text x="6.6" y="324.04" font-size="4.8" fill="#4a5560" font-family="Liberation Sans, sans-serif">1</text><text x="6.6" y="341.08" font-size="4.8" fill="#4a5560" font-family="Liberation Sans, sans-serif">1</text><text x="6.6" y="347.08" font-size="4.8" fill="#4a5560" font-family="Liberation Sans, sans-serif">2</text><text x="6.6" y="364.12" font-size="4.8" fill="#4a5560" font-family="Liberation Sans, sans-serif">1</text><text x="6.6" y="370.12" font-size="4.8" fill="#4a5560" font-family="Liberation Sans, sans-serif">3</text><text x="6.6" y="387.16" font-size="4.8" fill="#4a5560" font-family="Liberation Sans, sans-serif">1</text><text x="6.6" y="393.16" font-size="4.8" fill="#4a5560" font-family="Liberation Sans, sans-serif">4</text><text x="6.6" y="410.20" font-size="4.8" fill="#4a5560" font-family="Liberation Sans, sans-serif">1</text><text x="6.6" y="416.20" font-size="4.8" fill="#4a5560" font-family="Liberation Sans, sans-serif">5</text><text x="6.6" y="433.24" font-size="4.8" fill="#4a5560" font-family="Liberation Sans, sans-serif">1</text><text x="6.6" y="439.24" font-size="4.8" fill="#4a5560" font-family="Liberation Sans, sans-serif">6</text></g></svg>
<svg style="left:0;top:0" width="1024" height="550" viewBox="0 0 1024 550"><defs><clipPath id="cv"><rect x="38.0" y="62.2" width="615.2" height="436.79999999999995"/></clipPath></defs><g clip-path="url(#cv)"><rect x="218.9" y="121.8" width="196.6" height="253.6" fill="none" stroke="#555" stroke-width="0.9" opacity="0"/><path d="M415.2 122.6V375.1H219.6" stroke="#4d4d4d" stroke-width="1.9" fill="none"/><rect x="218.4" y="121.3" width="196.3" height="253.2" fill="#fff" stroke="#7d7d7d" stroke-width="0.7"/><path d="M38 187.3H206.5V348.1H113.8L111.5 365.2H38" stroke="#8a8a8a" stroke-width="0.55" fill="none"/><path d="M113.9 190V348" stroke="#9a9a9a" stroke-width="0.7" fill="none" stroke-dasharray="0.9 8.0"/><path d="M46 348.1H113" stroke="#9a9a9a" stroke-width="0.7" fill="none" stroke-dasharray="0.9 8.0"/><path d="M653 172.4H544.6L541.7 189.4H448.4L432.5 192.5V346.3L448.1 350.3H653" stroke="#8a8a8a" stroke-width="0.55" fill="none"/><path d="M545 189.4H650" stroke="#9a9a9a" stroke-width="0.7" fill="none" stroke-dasharray="0.9 8.0"/><path d="M541.9 192V347" stroke="#9a9a9a" stroke-width="0.7" fill="none" stroke-dasharray="0.9 8.0"/><path d="M234.7 499V411L236.5 394.8H415.7L418.1 412.1L435.1 415V499" stroke="#8a8a8a" stroke-width="0.55" fill="none"/><path d="M240 412.1H418" stroke="#9a9a9a" stroke-width="0.7" fill="none" stroke-dasharray="0.9 8.0"/><path d="M418.3 415V499" stroke="#9a9a9a" stroke-width="0.7" fill="none" stroke-dasharray="0.9 8.0"/><path d="M247.4 353V170.4M267.8 151H379.6V353" stroke="#aaa" stroke-width="0.5" fill="none"/><path d="M247.4 170.4L264.3 168L267.8 151" stroke="#707070" stroke-width="0.6" fill="none"/><path d="M247.6 349.4L264 352.6" stroke="#777" stroke-width="0.55" fill="none"/><path d="M268 168.3H379" stroke="#9a9a9a" stroke-width="0.7" fill="none" stroke-dasharray="0.9 8.0"/><path d="M264.5 171V350" stroke="#9a9a9a" stroke-width="0.7" fill="none" stroke-dasharray="0.9 8.0"/><rect x="247.4" y="150.9" width="132.3" height="201.7" fill="none" stroke="#6d80dc" stroke-width="0.7" stroke-dasharray="2 1.8"/><g transform="translate(243.6 147.4) rotate(45)"><path d="M-3.5 0L-1.2 -2.1V-0.75H1.2V-2.1L3.5 0 1.2 2.1V0.75H-1.2V2.1Z" fill="#000"/></g><g transform="translate(313.5 146.6) rotate(90)"><path d="M-3.5 0L-1.2 -2.1V-0.75H1.2V-2.1L3.5 0 1.2 2.1V0.75H-1.2V2.1Z" fill="#000"/></g><g transform="translate(383.3 147.6) rotate(-45)"><path d="M-3.5 0L-1.2 -2.1V-0.75H1.2V-2.1L3.5 0 1.2 2.1V0.75H-1.2V2.1Z" fill="#000"/></g><g transform="translate(243.0 251.6) rotate(0)"><path d="M-3.5 0L-1.2 -2.1V-0.75H1.2V-2.1L3.5 0 1.2 2.1V0.75H-1.2V2.1Z" fill="#000"/></g><g transform="translate(384.2 251.6) rotate(0)"><path d="M-3.5 0L-1.2 -2.1V-0.75H1.2V-2.1L3.5 0 1.2 2.1V0.75H-1.2V2.1Z" fill="#000"/></g><g transform="translate(243.6 356.2) rotate(-45)"><path d="M-3.5 0L-1.2 -2.1V-0.75H1.2V-2.1L3.5 0 1.2 2.1V0.75H-1.2V2.1Z" fill="#000"/></g><g transform="translate(313.5 356.6) rotate(90)"><path d="M-3.5 0L-1.2 -2.1V-0.75H1.2V-2.1L3.5 0 1.2 2.1V0.75H-1.2V2.1Z" fill="#000"/></g><g transform="translate(383.3 356.2) rotate(45)"><path d="M-3.5 0L-1.2 -2.1V-0.75H1.2V-2.1L3.5 0 1.2 2.1V0.75H-1.2V2.1Z" fill="#000"/></g></g></svg>
<div style="left:653.20px;top:61.60px;width:8.70px;height:437.70px;background:#cfcfcf"></div>
<div style="left:655.70px;top:164.20px;width:4.20px;height:272.30px;background:#878b8c;border-radius:2.1px"></div>
<div style="left:653.20px;top:49.60px;width:8.70px;height:9.00px;background:#fafafa;border:0.6px solid #d2cdc8;border-radius:1.5px"></div>
<svg style="left:656px;top:51px" width="4" height="7" viewBox="0 0 4 7"><g transform="translate(0.000 0.600)"><rect x="0.4" y="1.8" width="2.2" height="2.4" fill="none" stroke="#777" stroke-width="0.5"/><path d="M0.8 1.8V1Q0.8 0.4 1.5 0.4Q2.2 0.4 2.2 1" stroke="#777" stroke-width="0.5" fill="none"/></g></svg>
<div style="left:38.00px;top:499.00px;width:623.70px;height:13.60px;background:#cfcfcf"></div>
<div style="left:101.50px;top:503.50px;width:516.40px;height:4.50px;background:#878b8c;border-radius:2.2px"></div>
<div style="left:653.20px;top:499.30px;width:8.70px;height:13.60px;background:#e6e5e4"></div>
<svg style="left:653px;top:500px" width="10" height="11" viewBox="0 0 10 11"><g transform="translate(0.600 0.600)"><path d="M0.6 0.6L7 4.4 0.6 8.4Z" fill="#2aa34a"/><path d="M0.6 0.6L3.6 2.4 0.6 4.4Z" fill="#d33"/><path d="M0.6 4.6L3.8 6.4 0.6 8.4Z" fill="#36c"/></g></svg>
<div style="left:664.60px;top:277.60px;width:1.10px;height:1.10px;background:#3a3f41"></div>
<div style="left:664.60px;top:279.60px;width:1.10px;height:1.10px;background:#3a3f41"></div>
<div style="left:664.60px;top:281.60px;width:1.10px;height:1.10px;background:#3a3f41"></div>
<div style="left:0.00px;top:25.60px;width:24.00px;height:487.00px;background:#f6f5f4"></div>
<div style="left:24.00px;top:47.50px;width:14.00px;height:14.10px;background:#f6f5f4"></div>
<span class="t" id="t20" style="top:250.10px;font-size:15.5px;color:#111;font-weight:bold;left:6.60px;transform-origin:0 50%;transform:scaleX(1.0000);font-family:'Liberation Serif',serif;line-height:14px;height:14px;margin-top:-2.6px;">A</span>
<svg style="left:16px;top:248px" width="5" height="14" viewBox="0 0 5 14"><g transform="translate(0.600 0.600)"><path d="M0.2 0.3H2.8M0.2 11.3H2.8M1.5 0.3V11.3" stroke="#222" stroke-width="0.7"/></g></svg>
<svg style="left:8px;top:240px" width="10" height="5" viewBox="0 0 10 5"><g transform="translate(0.000 0.600)"><path d="M0.5 0Q4.5 3.6 8.5 0" stroke="#555" stroke-width="0.9" fill="none"/></g></svg>
<div style="left:2.00px;top:267.00px;width:22.60px;height:1.00px;background:#dedbd8"></div>
<svg style="left:7px;top:274px" width="13" height="13" viewBox="0 0 13 13"><g transform="translate(0.600 0.400)"><defs><linearGradient id="gg" x1="0" y1="0" x2="1" y2="1"><stop offset="0" stop-color="#d9f0d9"/><stop offset="1" stop-color="#3fa24a"/></linearGradient></defs><rect x="0.3" y="0.3" width="10.4" height="10.4" fill="url(#gg)"/><path d="M2.6 2.6L8.6 8.4" stroke="#333" stroke-width="0.7"/><rect x="1.4" y="1.4" width="2.2" height="2.2" fill="#fff" stroke="#333" stroke-width="0.6"/><rect x="7.4" y="7.2" width="2.2" height="2.2" fill="#fff" stroke="#333" stroke-width="0.6"/></g></svg>
<svg style="left:7px;top:293px" width="13" height="12" viewBox="0 0 13 12"><g transform="translate(0.400 0.000)"><path d="M1.6 1.8L9.8 1.2 9.4 9.6 1.4 9.2Z" fill="#6fa58c"/><g fill="#fff" stroke="#222" stroke-width="0.7"><rect x="0.4" y="0.6" width="2.2" height="2.2"/><rect x="8.6" y="0.4" width="2.2" height="2.2"/><rect x="0.4" y="8.2" width="2.2" height="2.2"/><rect x="8.6" y="8.4" width="2.2" height="2.2"/></g></g></svg>
<svg style="left:8px;top:309px" width="12" height="15" viewBox="0 0 12 15"><g transform="translate(0.000 0.500)"><path d="M9.6 0.6Q10.8 1.8 9.6 3L7.8 4.8 6.2 3.2 8 1.4Q8.8 0 9.6 0.6Z" fill="#222"/><path d="M5.4 3.4L7.6 5.6" stroke="#222" stroke-width="1.6"/><path d="M6.2 4.6L1.6 9.6 1 12 3 11 7.4 5.8" fill="#8ab4dc" stroke="#333" stroke-width="0.6"/></g></svg>
<svg style="left:7px;top:328px" width="14" height="15" viewBox="0 0 14 15"><g transform="translate(0.000 0.500)"><ellipse cx="6" cy="11.6" rx="5.2" ry="1.5" fill="#5aa85a" stroke="#2c6e2c" stroke-width="0.5"/><path d="M3 3.2L10.4 1.6 12 8 5 10.4Z" fill="#9fc2e6" stroke="#345" stroke-width="0.7"/><ellipse cx="4" cy="6.8" rx="1.6" ry="3.6" fill="#dfe9f3" stroke="#345" stroke-width="0.6" transform="rotate(-14 4 6.8)"/><path d="M4.4 9.6Q5 11 6 11.4" stroke="#2c6e2c" stroke-width="1.2" fill="none"/></g></svg>
<div style="left:2.00px;top:347.00px;width:22.60px;height:1.00px;background:#dedbd8"></div>
<svg style="left:7px;top:353px" width="14" height="15" viewBox="0 0 14 15"><g transform="translate(0.000 0.500)"><path d="M0.6 12.4V9Q2 6.4 4.2 6.2Q4.6 2.6 7.8 1.2Q10.6 0.4 11.6 2.6Q9.4 2 8.6 4Q10.6 4.6 10 6.8Q11.8 7.4 12.2 9.4V12.4Z" fill="#6b6f70"/><path d="M0.6 12.4V10.6Q6 8.2 12.2 10.4V12.4Z" fill="#9a9d9e"/></g></svg>
<svg style="left:6px;top:372px" width="15" height="15" viewBox="0 0 15 15"><g transform="translate(0.600 0.000)"><rect x="5.6" y="5" width="6" height="7.6" rx="0.8" fill="#58b058" stroke="#243" stroke-width="0.7" transform="rotate(-14 8.6 8.8)"/><rect x="5.4" y="2.6" width="3.4" height="2.4" fill="#ddd" stroke="#333" stroke-width="0.6" transform="rotate(-14 7 3.8)"/><g fill="#333"><circle cx="1" cy="1.4" r="0.6"/><circle cx="2.8" cy="0.8" r="0.6"/><circle cx="1.6" cy="3.4" r="0.6"/><circle cx="3.6" cy="2.8" r="0.6"/><circle cx="0.8" cy="5.2" r="0.5"/></g></g></svg>
<svg style="left:6px;top:390px" width="16" height="14" viewBox="0 0 16 14"><g transform="translate(0.400 0.000)"><path d="M6.4 0.6L12.2 3.2 8.4 10.6 2.4 8Z" fill="#f0a58a" stroke="#7a4a3a" stroke-width="0.5"/><path d="M3.6 5.6L9.6 8.2 8.4 10.6 2.4 8Z" fill="#2a4fd0"/><path d="M0.6 11.8H12.8" stroke="#555" stroke-width="0.6"/></g></svg>
<svg style="left:6px;top:407px" width="15" height="15" viewBox="0 0 15 15"><g transform="translate(0.800 0.500)"><path d="M6.4 3.6V7.4H2.6V10M6.4 7.4H10.4V10" stroke="#222" stroke-width="0.8" fill="none"/><rect x="4.2" y="0.6" width="4.4" height="3.4" fill="#c9dcf0" stroke="#234" stroke-width="0.7"/><rect x="0.6" y="9.4" width="4" height="3.4" fill="#9fc2e6" stroke="#234" stroke-width="0.7"/><rect x="8.4" y="9.4" width="4" height="3.4" fill="#9fc2e6" stroke="#234" stroke-width="0.7"/><rect x="4.6" y="6.4" width="3.6" height="2" fill="#e9c84a" stroke="#654" stroke-width="0.4"/></g></svg>
<div style="left:2.00px;top:427.00px;width:22.60px;height:1.00px;background:#dedbd8"></div>
<svg style="left:6px;top:432px" width="16" height="15" viewBox="0 0 16 15"><g transform="translate(0.800 0.000)"><circle cx="5" cy="5.4" r="4.2" fill="#eef4fa" stroke="#555" stroke-width="1"/><path d="M8 8.6L12.2 13" stroke="#e0a030" stroke-width="2.2" stroke-linecap="round"/><path d="M8 8.6L9.4 10" stroke="#555" stroke-width="1.4"/></g></svg>
<svg style="left:7px;top:448px" width="14" height="16" viewBox="0 0 14 16"><g transform="translate(0.600 0.600)"><g transform="translate(12 0) scale(-1 1)"><path d="M5.6 0.8L10.6 2.8 6.4 12.8 1.4 10.8Z" fill="#eab49a" stroke="#4a3a30" stroke-width="0.8"/><path d="M3.2 9.6L5 10.4M4 7.6L5.8 8.4M4.8 5.6L6.6 6.4M5.6 3.6L7.4 4.4" stroke="#4a3a30" stroke-width="0.5"/></g></g></svg>
<div style="left:669.30px;top:56.00px;width:299.60px;height:447.40px;background:#eceae8"></div>
<div style="left:671.00px;top:97.70px;width:296.10px;height:404.60px;background:#fff"></div>
<div style="left:669.30px;top:56.00px;width:299.60px;height:21.00px;background:#dfdcd9;border-radius:1.5px 1.5px 0 0"></div>
<div style="left:678.30px;top:56.00px;width:94.00px;height:21.00px;background:#e9e7e5"></div>
<svg style="left:678px;top:74px" width="96" height="4" viewBox="0 0 96 4"><g transform="translate(0.300 0.300)"><rect width="94" height="2.4" fill="#3584e4"/></g></svg>
<svg style="left:671px;top:63px" width="5" height="8" viewBox="0 0 5 8"><g transform="translate(0.800 0.800)"><path d="M3 0V5.6L0 2.8Z" fill="#6a6e70"/></g></svg>
<svg style="left:961px;top:63px" width="5" height="8" viewBox="0 0 5 8"><g transform="translate(0.700 0.600)"><path d="M0 0V6L3.2 3.0Z" fill="#2e3436"/></g></svg>
<svg style="left:685px;top:62px" width="9" height="11" viewBox="0 0 9 11"><g transform="translate(0.200 0.000)"><path d="M0.5 0.5H4.6L6.6 2.6V8.8H0.5Z" fill="#fff" stroke="#aaa" stroke-width="0.6"/><circle cx="4.6" cy="6.4" r="1.6" fill="none" stroke="#999" stroke-width="0.7"/></g></svg>
<span class="t" id="t21" style="top:62.20px;font-size:6.4px;color:#2e3436;left:695.90px;transform-origin:0 50%;transform:scaleX(0.9795);">Document Properties</span>
<svg style="left:759px;top:64px" width="6" height="7" viewBox="0 0 6 7"><g transform="translate(0.400 0.500)"><path d="M0.5 0.5L4.1 4.1M4.1 0.5L0.5 4.1" stroke="#9a9c9c" stroke-width="0.9"/></g></svg>
<svg style="left:788px;top:62px" width="12" height="11" viewBox="0 0 12 11"><g transform="translate(0.600 0.000)"><rect x="0.5" y="0.5" width="8.6" height="8.6" fill="#fff" stroke="#2e3436" stroke-width="0.9"/><rect x="0.5" y="0.5" width="8.6" height="1.6" fill="#2e3436"/><path d="M3.6 4.2L2.4 5.6 3.6 7M6 4.2L7.2 5.6 6 7" stroke="#2e3436" stroke-width="0.7" fill="none"/></g></svg>
<svg style="left:826px;top:61px" width="12" height="12" viewBox="0 0 12 12"><g transform="translate(0.400 0.600)"><path d="M0.6 4.6L3.4 2.4V3.8H7.2V9H5V6.2H3.4V7Z" fill="#e8b021" stroke="#3a2c08" stroke-width="0.7"/><circle cx="7" cy="2.6" r="1.9" fill="#cfdcea" stroke="#222" stroke-width="0.8"/></g></svg>
<svg style="left:863px;top:61px" width="12" height="12" viewBox="0 0 12 12"><g transform="translate(0.600 0.800)"><path d="M0.9 1.1H8.4L1.6 8.8H0.9Z" fill="#fff" stroke="#1a1a1a" stroke-width="1" stroke-linejoin="round"/><path d="M0.6 1H8.6" stroke="#1a1a1a" stroke-width="1.4"/><path d="M1.6 9.2L8.6 2" stroke="#1a1a1a" stroke-width="2.2"/><path d="M7.2 1.2L9.6 0.4 9 3.2Z" fill="#f0bb1c"/></g></svg>
<svg style="left:900px;top:61px" width="12" height="12" viewBox="0 0 12 12"><g transform="translate(0.800 0.800)"><path d="M1 0.6H5.4L7.4 2.6V9.2H1Z" fill="#fff" stroke="#2e3436" stroke-width="0.9"/><path d="M4.4 6H9.4M7.8 4.4L9.6 6 7.8 7.6" stroke="#2e3436" stroke-width="0.9" fill="none"/></g></svg>
<svg style="left:937px;top:61px" width="12" height="13" viewBox="0 0 12 13"><g transform="translate(0.600 0.600)"><path d="M0.8 0V10.4" stroke="#e06a6a" stroke-width="0.9"/><rect x="2" y="1" width="4.6" height="2.4" fill="#d8d8d8" stroke="#555" stroke-width="0.5"/><rect x="2" y="4.2" width="7.2" height="2.4" fill="#8fb4dc" stroke="#456" stroke-width="0.5"/><rect x="2" y="7.4" width="5.6" height="2.2" fill="#d8d8d8" stroke="#555" stroke-width="0.5"/></g></svg>
<div style="left:670.50px;top:77.00px;width:296.60px;height:20.70px;background:#e4e1de;border-top:1px solid #d8d5d1"></div>
<svg style="left:674px;top:95px" width="31" height="4" viewBox="0 0 31 4"><g transform="translate(0.700 0.100)"><rect width="28.7" height="2.5" fill="#3584e4"/></g></svg>
<span class="t" id="t22" style="top:83.00px;font-size:6.4px;color:#2e3436;left:681.80px;transform-origin:0 50%;transform:scaleX(0.9038);">Page</span>
<span class="t" id="t23" style="top:83.00px;font-size:6.4px;color:#2e3436;left:713.80px;transform-origin:0 50%;transform:scaleX(0.9580);">Guides</span>
<span class="t" id="t24" style="top:83.00px;font-size:6.4px;color:#2e3436;left:750.80px;transform-origin:0 50%;transform:scaleX(0.9554);">Grids</span>
<span class="t" id="t25" style="top:83.00px;font-size:6.4px;color:#2e3436;left:784.60px;transform-origin:0 50%;transform:scaleX(0.8971);">Snap</span>
<span class="t" id="t26" style="top:83.00px;font-size:6.4px;color:#2e3436;left:817.00px;transform-origin:0 50%;transform:scaleX(0.9816);">Color</span>
<span class="t" id="t27" style="top:83.00px;font-size:6.4px;color:#2e3436;left:849.60px;transform-origin:0 50%;transform:scaleX(0.9970);">Scripting</span>
<span class="t" id="t28" style="top:83.00px;font-size:6.4px;color:#2e3436;left:892.00px;transform-origin:0 50%;transform:scaleX(0.9679);">Metadata</span>
<span class="t" id="t29" style="top:83.00px;font-size:6.4px;color:#2e3436;left:935.40px;transform-origin:0 50%;transform:scaleX(0.9895);">License</span>
<span class="t" id="t30" style="top:100.20px;font-size:6.4px;color:#1f2426;font-weight:bold;left:672.90px;transform-origin:0 50%;transform:scaleX(0.9197);">General</span>
<span class="t" id="t31" style="top:115.50px;font-size:6.4px;color:#2e3436;left:672.90px;transform-origin:0 50%;transform:scaleX(0.9680);">Display units:</span>
<div class="btn" style="left:713.30px;top:110.60px;width:31.30px;height:17.70px;"></div><span class="t" id="t32" style="top:114.95px;font-size:6.4px;color:#2e3436;left:719.90px;transform-origin:0 50%;transform:scaleX(0.9700);">in</span><svg style="left:732px;top:118px" width="8" height="5" viewBox="0 0 8 5"><g transform="translate(0.500 0.050)"><path d="M0 0H6L3.0 3.2Z" fill="#2e3436"/></g></svg>
<span class="t" id="t33" style="top:139.10px;font-size:6.4px;color:#1f2426;font-weight:bold;left:672.90px;transform-origin:0 50%;transform:scaleX(0.9081);">Page Size</span>
<div style="left:672.10px;top:149.80px;width:292.60px;height:168.80px;background:#fff;border:0.7px solid #d9d5d1;overflow:hidden"></div>
<div class="hl" style="left:672.80px;top:162.60px;width:291.20px;height:12.20px;"></div>
<div style="left:0;top:0;width:1024px;height:318.2px;overflow:hidden"><span class="t" id="t34" style="top:152.05px;font-size:6.4px;color:#1f2426;left:675.30px;transform-origin:0 50%;transform:scaleX(0.9581);">A4</span><span class="t" id="t35" style="top:152.05px;font-size:6.4px;color:#1f2426;left:760.60px;transform-origin:0 50%;transform:scaleX(0.9266);">210.0 x 297.0 mm</span><span class="t" id="t36" style="top:164.29px;font-size:6.4px;color:#fff;left:675.30px;transform-origin:0 50%;transform:scaleX(0.9259);">US Letter</span><span class="t" id="t37" style="top:164.29px;font-size:6.4px;color:#fff;left:760.60px;transform-origin:0 50%;transform:scaleX(0.9463);">8.5 x 11.0 in</span><span class="t" id="t38" style="top:176.53px;font-size:6.4px;color:#1f2426;left:675.30px;transform-origin:0 50%;transform:scaleX(0.9500);">US Legal</span><span class="t" id="t39" style="top:176.53px;font-size:6.4px;color:#1f2426;left:760.60px;transform-origin:0 50%;transform:scaleX(0.9450);">8.5 x 14.0 in</span><span class="t" id="t40" style="top:188.77px;font-size:6.4px;color:#1f2426;left:675.30px;transform-origin:0 50%;transform:scaleX(0.9251);">US Executive</span><span class="t" id="t41" style="top:188.77px;font-size:6.4px;color:#1f2426;left:760.60px;transform-origin:0 50%;transform:scaleX(0.9389);">7.2 x 10.5 in</span><span class="t" id="t42" style="top:201.01px;font-size:6.4px;color:#1f2426;left:675.30px;transform-origin:0 50%;transform:scaleX(0.9659);">US Ledger/Tabloid</span><span class="t" id="t43" style="top:201.01px;font-size:6.4px;color:#1f2426;left:760.60px;transform-origin:0 50%;transform:scaleX(0.9392);">11.0 x 17.0 in</span><span class="t" id="t44" style="top:213.25px;font-size:6.4px;color:#1f2426;left:675.30px;transform-origin:0 50%;transform:scaleX(0.9500);">A0</span><span class="t" id="t45" style="top:213.25px;font-size:6.4px;color:#1f2426;left:760.60px;transform-origin:0 50%;transform:scaleX(0.9441);">841.0 x 1189.0 mm</span><span class="t" id="t46" style="top:225.49px;font-size:6.4px;color:#1f2426;left:675.30px;transform-origin:0 50%;transform:scaleX(0.9500);">A1</span><span class="t" id="t47" style="top:225.49px;font-size:6.4px;color:#1f2426;left:760.60px;transform-origin:0 50%;transform:scaleX(0.9305);">594.0 x 841.0 mm</span><span class="t" id="t48" style="top:237.73px;font-size:6.4px;color:#1f2426;left:675.30px;transform-origin:0 50%;transform:scaleX(0.9500);">A2</span><span class="t" id="t49" style="top:237.73px;font-size:6.4px;color:#1f2426;left:760.60px;transform-origin:0 50%;transform:scaleX(0.9450);">420.0 x 594.0 mm</span><span class="t" id="t50" style="top:249.97px;font-size:6.4px;color:#1f2426;left:675.30px;transform-origin:0 50%;transform:scaleX(0.9500);">A3</span><span class="t" id="t51" style="top:249.97px;font-size:6.4px;color:#1f2426;left:760.60px;transform-origin:0 50%;transform:scaleX(0.9450);">297.0 x 420.0 mm</span><span class="t" id="t52" style="top:262.21px;font-size:6.4px;color:#1f2426;left:675.30px;transform-origin:0 50%;transform:scaleX(0.9500);">A5</span><span class="t" id="t53" style="top:262.21px;font-size:6.4px;color:#1f2426;left:760.60px;transform-origin:0 50%;transform:scaleX(0.9450);">148.0 x 210.0 mm</span><span class="t" id="t54" style="top:274.45px;font-size:6.4px;color:#1f2426;left:675.30px;transform-origin:0 50%;transform:scaleX(0.9500);">A6</span><span class="t" id="t55" style="top:274.45px;font-size:6.4px;color:#1f2426;left:760.60px;transform-origin:0 50%;transform:scaleX(0.9450);">105.0 x 148.0 mm</span><span class="t" id="t56" style="top:286.69px;font-size:6.4px;color:#1f2426;left:675.30px;transform-origin:0 50%;transform:scaleX(0.9500);">A7</span><span class="t" id="t57" style="top:286.69px;font-size:6.4px;color:#1f2426;left:760.60px;transform-origin:0 50%;transform:scaleX(0.9326);">74.0 x 105.0 mm</span><span class="t" id="t58" style="top:298.93px;font-size:6.4px;color:#1f2426;left:675.30px;transform-origin:0 50%;transform:scaleX(0.9500);">A8</span><span class="t" id="t59" style="top:298.93px;font-size:6.4px;color:#1f2426;left:760.60px;transform-origin:0 50%;transform:scaleX(0.9444);">52.0 x 74.0 mm</span><span class="t" id="t60" style="top:311.17px;font-size:6.4px;color:#1f2426;left:675.30px;transform-origin:0 50%;transform:scaleX(0.9500);">A9</span><span class="t" id="t61" style="top:311.17px;font-size:6.4px;color:#1f2426;left:760.60px;transform-origin:0 50%;transform:scaleX(0.9444);">37.0 x 52.0 mm</span></div>
<span class="t" id="t62" style="top:322.10px;font-size:6.4px;color:#2e3436;left:672.90px;transform-origin:0 50%;transform:scaleX(1.0016);">Orientation:</span>
<div style="left:878.70px;top:322.20px;width:8.30px;height:8.30px;background:#fff;border:2.2px solid #3584e4;border-radius:50%"></div>
<span class="t" id="t63" style="top:322.10px;font-size:6.4px;color:#2e3436;left:889.80px;transform-origin:0 50%;transform:scaleX(0.9656);">Portrait</span>
<div style="left:919.40px;top:322.30px;width:8.20px;height:8.20px;background:#fff;border:0.6px solid #bdb8b3;border-radius:50%"></div>
<span class="t" id="t64" style="top:322.10px;font-size:6.4px;color:#2e3436;left:930.20px;transform-origin:0 50%;transform:scaleX(0.9590);">Landscape</span>
<div style="left:672.30px;top:339.00px;width:292.40px;height:38.40px;border:0.7px solid #e0ddd9"></div>
<div style="left:672.00px;top:334.00px;width:34.20px;height:9.00px;background:#fff"></div>
<span class="t" id="t65" style="top:334.30px;font-size:6.4px;color:#2e3436;left:672.90px;transform-origin:0 50%;transform:scaleX(0.9269);">Custom size</span>
<span class="t" id="t66" style="top:350.30px;font-size:6.4px;color:#2e3436;left:678.40px;transform-origin:0 50%;transform:scaleX(1.0372);">Width:</span>
<div class="fld" style="left:700.30px;top:345.90px;width:63.40px;height:17.50px;"></div><span class="t" id="t67" style="top:350.15px;font-size:6.4px;color:#2e3436;left:702.00px;transform-origin:0 50%;transform:scaleX(0.9347);">8.50000</span><div style="left:745.00px;top:346.50px;width:1.00px;height:16.30px;background:#f1efed"></div><div style="left:754.00px;top:346.50px;width:1.00px;height:16.30px;background:#f1efed"></div><div style="left:746.50px;top:354.00px;width:6.70px;height:1.00px;background:#2e3436"></div><div style="left:755.20px;top:354.00px;width:7.40px;height:1.00px;background:#2e3436"></div><div style="left:758.00px;top:350.95px;width:1.00px;height:7.40px;background:#2e3436"></div>
<span class="t" id="t68" style="top:350.30px;font-size:6.4px;color:#2e3436;left:791.50px;transform-origin:0 50%;transform:scaleX(1.0222);">Height:</span>
<div class="fld" style="left:816.30px;top:345.90px;width:63.30px;height:17.50px;"></div><span class="t" id="t69" style="top:350.15px;font-size:6.4px;color:#2e3436;left:818.10px;transform-origin:0 50%;transform:scaleX(0.9165);">11.00000</span><div style="left:861.00px;top:346.50px;width:1.00px;height:16.30px;background:#f1efed"></div><div style="left:870.00px;top:346.50px;width:1.00px;height:16.30px;background:#f1efed"></div><div style="left:862.00px;top:354.00px;width:7.20px;height:1.00px;background:#2e3436"></div><div style="left:871.00px;top:354.00px;width:7.40px;height:1.00px;background:#2e3436"></div><div style="left:874.00px;top:350.95px;width:1.00px;height:7.40px;background:#2e3436"></div>
<span class="t" id="t70" style="top:350.30px;font-size:6.4px;color:#2e3436;left:907.80px;transform-origin:0 50%;transform:scaleX(0.9300);">Units:</span>
<div class="btn" style="left:927.40px;top:345.90px;width:31.10px;height:17.50px;"></div><span class="t" id="t71" style="top:350.15px;font-size:6.4px;color:#2e3436;left:933.60px;transform-origin:0 50%;transform:scaleX(0.9700);">in</span><svg style="left:946px;top:353px" width="8" height="5" viewBox="0 0 8 5"><g transform="translate(0.400 0.250)"><path d="M0 0H6L3.0 3.2Z" fill="#2e3436"/></g></svg>
<svg style="left:678px;top:368px" width="5" height="7" viewBox="0 0 5 7"><g transform="translate(0.000 0.000)"><path d="M0 0V5.8L3.2 2.9Z" fill="#2e3436"/></g></svg>
<span class="t" id="t72" style="top:366.40px;font-size:6.4px;color:#2e3436;left:683.90px;transform-origin:0 50%;transform:scaleX(0.9646);">Resize page to content...</span>
<div style="left:672.30px;top:385.20px;width:292.40px;height:38.40px;border:0.7px solid #e0ddd9"></div>
<div style="left:672.00px;top:380.00px;width:15.60px;height:9.00px;background:#fff"></div>
<span class="t" id="t73" style="top:380.20px;font-size:6.4px;color:#2e3436;left:672.90px;transform-origin:0 50%;transform:scaleX(0.8812);">Scale</span>
<span class="t" id="t74" style="top:396.00px;font-size:6.4px;color:#2e3436;left:678.40px;transform-origin:0 50%;transform:scaleX(0.9149);">Scale x:</span>
<div class="fld" style="left:702.30px;top:391.40px;width:57.20px;height:18.00px;"></div><span class="t" id="t75" style="top:395.90px;font-size:6.4px;color:#2e3436;left:703.90px;transform-origin:0 50%;transform:scaleX(0.9116);">90.00000</span><div style="left:741.00px;top:392.00px;width:1.00px;height:16.80px;background:#f1efed"></div><div style="left:750.00px;top:392.00px;width:1.00px;height:16.80px;background:#f1efed"></div><div style="left:741.90px;top:400.00px;width:7.40px;height:1.00px;background:#2e3436"></div><div style="left:750.90px;top:400.00px;width:7.50px;height:1.00px;background:#2e3436"></div><div style="left:754.00px;top:396.65px;width:1.00px;height:7.50px;background:#2e3436"></div>
<span class="t" id="t76" style="top:396.00px;font-size:6.4px;color:#aeb0b0;left:788.40px;transform-origin:0 50%;transform:scaleX(0.9149);">Scale y:</span>
<div class="fld" style="left:812.50px;top:391.60px;width:56.60px;height:17.80px;background:#f8f7f6;"></div><span class="t" id="t77" style="top:396.00px;font-size:6.4px;color:#b0aeab;left:814.00px;transform-origin:0 50%;transform:scaleX(0.9116);">90.00000</span><div style="left:850.00px;top:392.20px;width:1.00px;height:16.60px;background:#f1efed"></div><div style="left:859.00px;top:392.20px;width:1.00px;height:16.60px;background:#f1efed"></div><div style="left:851.60px;top:400.00px;width:6.80px;height:1.00px;background:#b5b3b0"></div><div style="left:860.60px;top:400.00px;width:7.00px;height:1.00px;background:#b5b3b0"></div><div style="left:864.00px;top:397.00px;width:1.00px;height:7.00px;background:#b5b3b0"></div>
<span class="t" id="t78" style="top:396.00px;font-size:6.4px;color:#2e3436;left:904.90px;transform-origin:0 50%;transform:scaleX(0.9790);">User units per in.</span>
<svg style="left:678px;top:413px" width="5" height="8" viewBox="0 0 5 8"><g transform="translate(0.000 0.900)"><path d="M0 0V5.8L3.2 2.9Z" fill="#2e3436"/></g></svg>
<span class="t" id="t79" style="top:412.30px;font-size:6.4px;color:#2e3436;left:683.90px;transform-origin:0 50%;transform:scaleX(0.9634);">Viewbox...</span>
<span class="t" id="t80" style="top:435.50px;font-size:6.4px;color:#1f2426;font-weight:bold;left:675.00px;transform-origin:0 50%;transform:scaleX(0.9438);">Background</span>
<div style="left:676.80px;top:446.70px;width:8.40px;height:8.40px;background:#fff;border:0.6px solid #d0ccc7;border-radius:1.6px"></div>
<span class="t" id="t81" style="top:446.70px;font-size:6.4px;color:#2e3436;left:687.80px;transform-origin:0 50%;transform:scaleX(0.9864);">Checkerboard background</span>
<span class="t" id="t82" style="top:462.30px;font-size:6.4px;color:#2e3436;left:675.00px;transform-origin:0 50%;transform:scaleX(0.9958);">Background color:</span>
<div class="btn" style="left:729.70px;top:457.90px;width:27.70px;height:17.50px;"></div>
<div style="left:734.90px;top:460.50px;width:8.60px;height:12.10px;background:#c4c4c4;border-radius:1.5px 0 0 1.5px"></div>
<div style="left:743.50px;top:460.50px;width:8.60px;height:12.10px;background:#fff;border-radius:0 1.5px 1.5px 0"></div>
<span class="t" id="t83" style="top:478.50px;font-size:6.4px;color:#1f2426;font-weight:bold;left:675.00px;transform-origin:0 50%;transform:scaleX(0.8929);">Display</span>
<div style="left:676.80px;top:489.30px;width:8.40px;height:8.40px;background:#3584e4;border-radius:1.6px"></div><svg style="left:676px;top:489px" width="11" height="10" viewBox="0 0 11 10"><g transform="translate(0.800 0.300)"><path d="M1.9 4.3L3.6 6 6.6 2.6" stroke="#fff" stroke-width="1.3" fill="none" stroke-linecap="round" stroke-linejoin="round"/></g></svg>
<span class="t" id="t84" style="top:489.30px;font-size:6.4px;color:#2e3436;left:687.80px;transform-origin:0 50%;transform:scaleX(0.9640);">Use antialiasing</span>
<span class="t" id="t85" style="top:435.50px;font-size:6.4px;color:#1f2426;font-weight:bold;left:823.80px;transform-origin:0 50%;transform:scaleX(0.9450);">Border</span>
<div style="left:825.60px;top:446.80px;width:8.40px;height:8.40px;background:#3584e4;border-radius:1.6px"></div><svg style="left:825px;top:446px" width="11" height="11" viewBox="0 0 11 11"><g transform="translate(0.600 0.800)"><path d="M1.9 4.3L3.6 6 6.6 2.6" stroke="#fff" stroke-width="1.3" fill="none" stroke-linecap="round" stroke-linejoin="round"/></g></svg>
<span class="t" id="t86" style="top:446.70px;font-size:6.4px;color:#2e3436;left:836.30px;transform-origin:0 50%;transform:scaleX(0.9802);">Show page border</span>
<div style="left:825.60px;top:458.10px;width:8.40px;height:8.40px;background:#fff;border:0.6px solid #d0ccc7;border-radius:1.6px"></div>
<span class="t" id="t87" style="top:458.00px;font-size:6.4px;color:#2e3436;left:836.30px;transform-origin:0 50%;transform:scaleX(1.0100);">Border on top of drawing</span>
<div style="left:825.60px;top:469.20px;width:8.40px;height:8.40px;background:#3584e4;border-radius:1.6px"></div><svg style="left:825px;top:469px" width="11" height="10" viewBox="0 0 11 10"><g transform="translate(0.600 0.200)"><path d="M1.9 4.3L3.6 6 6.6 2.6" stroke="#fff" stroke-width="1.3" fill="none" stroke-linecap="round" stroke-linejoin="round"/></g></svg>
<span class="t" id="t88" style="top:469.10px;font-size:6.4px;color:#2e3436;left:836.30px;transform-origin:0 50%;transform:scaleX(0.9876);">Show border shadow</span>
<span class="t" id="t89" style="top:484.70px;font-size:6.4px;color:#2e3436;left:823.80px;transform-origin:0 50%;transform:scaleX(0.9701);">Border color:</span>
<div class="btn" style="left:863.20px;top:480.40px;width:27.40px;height:17.70px;"></div>
<div style="left:867.90px;top:482.90px;width:17.20px;height:12.50px;background:#666;border-radius:1.5px"></div>
<svg style="left:984px;top:54px" width="11" height="12" viewBox="0 0 11 12"><g transform="translate(0.500 0.300)"><path d="M0.8 0.6H5L7 2.6V9.4H0.8Z" fill="#fff" stroke="#c8c8c8" stroke-width="0.6"/><circle cx="6.6" cy="4.4" r="1.5" fill="#fff" stroke="#3a7bd0" stroke-width="1"/></g></svg>
<svg style="left:984px;top:73px" width="11" height="11" viewBox="0 0 11 11"><g transform="translate(0.200 0.500)"><path d="M0.5 1.6Q0.5 0.6 1.4 0.6H3.6L4.4 1.6H8.2Q9 1.6 9 2.4V8H0.5Z" fill="#c9a67c" stroke="#a88658" stroke-width="0.5"/><rect x="2.2" y="3.6" width="6" height="3.4" fill="#e8e2d8" stroke="#8a7a66" stroke-width="0.4"/><rect x="2.2" y="3.6" width="6" height="1" fill="#8a7a66"/></g></svg>
<svg style="left:984px;top:91px" width="11" height="12" viewBox="0 0 11 12"><g transform="translate(0.700 0.200)"><path d="M4.3 0.4V5.4M2.4 3.6L4.3 5.8 6.2 3.6" stroke="#444" stroke-width="1.3" fill="none"/><path d="M0.6 5.4H1.8L2.4 7H6.2L6.8 5.4H8V9.8H0.6Z" fill="#3a7fc4" stroke="#285c94" stroke-width="0.4"/><rect x="2.6" y="8" width="3.4" height="1" fill="#dfe9f3"/></g></svg>
<svg style="left:984px;top:109px" width="11" height="12" viewBox="0 0 11 12"><g transform="translate(0.200 0.900)"><rect x="1.8" y="0.5" width="6" height="3" fill="#bbb" stroke="#222" stroke-width="0.7"/><rect x="0.5" y="2.8" width="8.6" height="4.4" rx="0.8" fill="#2e3436"/><rect x="2" y="6" width="5.6" height="3.4" fill="#f0f0f0" stroke="#222" stroke-width="0.7"/></g></svg>
<div style="left:978.80px;top:128.00px;width:19.00px;height:1.00px;background:#dedbd8"></div>
<svg style="left:984px;top:136px" width="11" height="12" viewBox="0 0 11 12"><g transform="translate(0.500 0.200)"><path d="M2.4 0.6H6L8 2.6V9.4H2.4Z" fill="#fff" stroke="#2e3436" stroke-width="0.8"/><path d="M0 5.2H5M3.4 3.6L5.2 5.2 3.4 6.8" stroke="#2e3436" stroke-width="0.9" fill="none"/></g></svg>
<svg style="left:984px;top:154px" width="11" height="12" viewBox="0 0 11 12"><g transform="translate(0.300 0.600)"><path d="M1 0.6H4.8L6.8 2.6V9.4H1Z" fill="#fff" stroke="#2e3436" stroke-width="0.8"/><path d="M4.2 6H9M7.4 4.4L9.2 6 7.4 7.6" stroke="#2e3436" stroke-width="0.9" fill="none"/></g></svg>
<div style="left:978.80px;top:172.00px;width:19.00px;height:1.00px;background:#dedbd8"></div>
<svg style="left:984px;top:182px" width="11" height="10" viewBox="0 0 11 10"><g transform="translate(0.500 0.600)"><path d="M0.4 2.6L3.4 0.2V1.6H5.8Q8.6 1.6 8.6 4.4Q8.6 7 5.8 7H3.6V5.2H5.6Q6.8 5.2 6.8 4.3Q6.8 3.5 5.6 3.5H3.4V5Z" fill="#e8b021" stroke="#b5850c" stroke-width="0.4"/></g></svg>
<svg style="left:984px;top:201px" width="11" height="9" viewBox="0 0 11 9"><g transform="translate(0.500 0.300)"><path d="M8.6 2.6L5.6 0.2V1.6H3.2Q0.4 1.6 0.4 4.4Q0.4 7 3.2 7H5.4V5.2H3.4Q2.2 5.2 2.2 4.3Q2.2 3.5 3.4 3.5H5.6V5Z" fill="#dfe8cf" stroke="#cdd6bd" stroke-width="0.4"/></g></svg>
<div style="left:978.80px;top:217.00px;width:19.00px;height:1.00px;background:#dedbd8"></div>
<svg style="left:984px;top:225px" width="11" height="12" viewBox="0 0 11 12"><g transform="translate(0.300 0.600)"><rect x="0.6" y="0.6" width="5.6" height="5.6" fill="#fff" stroke="#8a8d8e" stroke-width="0.7"/><rect x="3.2" y="3.2" width="5.6" height="5.6" fill="#f2f2f2" stroke="#8a8d8e" stroke-width="0.7"/></g></svg>
<svg style="left:984px;top:244px" width="11" height="12" viewBox="0 0 11 12"><g transform="translate(0.300 0.500)"><path d="M1.4 0.4L6 6.6M8 0.4L3.4 6.6" stroke="#9a9c9c" stroke-width="0.9"/><circle cx="2.2" cy="7.8" r="1.8" fill="#d42a2a"/><circle cx="7.2" cy="7.8" r="1.8" fill="#d42a2a"/></g></svg>
<svg style="left:984px;top:263px" width="11" height="11" viewBox="0 0 11 11"><g transform="translate(0.500 0.000)"><rect x="0.5" y="1" width="8" height="8.6" rx="0.6" fill="#d9a658" stroke="#9a7436" stroke-width="0.5"/><rect x="2.6" y="0.3" width="3.8" height="1.6" fill="#888"/><rect x="3" y="3.4" width="4.8" height="5.4" fill="#f4f4f4" stroke="#888" stroke-width="0.4"/></g></svg>
<div style="left:978.80px;top:281.00px;width:19.00px;height:1.00px;background:#dedbd8"></div>
<svg style="left:984px;top:289px" width="11" height="12" viewBox="0 0 11 12"><g transform="translate(0.500 0.200)"><rect x="0.6" y="0.6" width="5.8" height="6.6" fill="#fff" stroke="#2e3436" stroke-width="0.8"/><rect x="2.6" y="2.6" width="5.8" height="6.8" fill="#cfe0f2" stroke="#2e3436" stroke-width="0.8"/></g></svg>
<svg style="left:984px;top:307px" width="11" height="12" viewBox="0 0 11 12"><g transform="translate(0.300 0.800)"><rect x="0.6" y="0.6" width="5.8" height="6" fill="#fff" stroke="#2e3436" stroke-width="0.8"/><rect x="2.6" y="2.8" width="6.2" height="6.6" fill="#e4e4e4" stroke="#2e3436" stroke-width="0.8"/><path d="M4 8L5.8 4.6 7.6 8Z" fill="#e8b021" stroke="#333" stroke-width="0.4"/></g></svg>
<svg style="left:984px;top:326px" width="11" height="12" viewBox="0 0 11 12"><g transform="translate(0.300 0.300)"><rect x="0.6" y="0.6" width="5.8" height="6" fill="#fff" stroke="#2e3436" stroke-width="0.8"/><rect x="2.6" y="2.8" width="6.2" height="6.6" fill="#e4e4e4" stroke="#2e3436" stroke-width="0.8"/><path d="M4 6H7.6M4 7.6H7.6" stroke="#333" stroke-width="0.6"/><rect x="5" y="4.2" width="1.6" height="1.2" fill="#e8b021"/></g></svg>
<div style="left:978.80px;top:344.00px;width:19.00px;height:1.00px;background:#dedbd8"></div>
<svg style="left:984px;top:352px" width="11" height="11" viewBox="0 0 11 11"><g transform="translate(0.000 0.000)"><path d="M0.6 2.6V0.6H2.6M7.4 0.6H9.4V2.6M9.4 7.4V9.4H7.4M2.6 9.4H0.6V7.4" stroke="#2e3436" stroke-width="0.8" fill="none"/><circle cx="5.6" cy="4.2" r="2.4" fill="#cfe0f2" stroke="#567" stroke-width="0.6"/><path d="M3.8 6L1.6 8.4" stroke="#2e3436" stroke-width="1"/></g></svg>
<svg style="left:984px;top:370px" width="11" height="12" viewBox="0 0 11 12"><g transform="translate(0.000 0.600)"><path d="M0.6 2.6V0.6H2.6M7.4 0.6H9.4V2.6M9.4 7.4V9.4H7.4M2.6 9.4H0.6V7.4" stroke="#2e3436" stroke-width="0.8" fill="none"/><circle cx="5.6" cy="3.8" r="2.4" fill="#cfe0f2" stroke="#567" stroke-width="0.6"/><path d="M2 6.2H6.4V8.2H2Z" fill="#e8b021" stroke="#333" stroke-width="0.4"/></g></svg>
<div style="left:978.80px;top:389.00px;width:19.00px;height:1.00px;background:#dedbd8"></div>
<svg style="left:984px;top:397px" width="11" height="12" viewBox="0 0 11 12"><g transform="translate(0.000 0.400)"><path d="M0.9 1.1H8.4L1.6 8.8H0.9Z" fill="#fff" stroke="#1a1a1a" stroke-width="1" stroke-linejoin="round"/><path d="M0.6 1H8.6" stroke="#1a1a1a" stroke-width="1.4"/><path d="M1.6 9.2L8.6 2" stroke="#1a1a1a" stroke-width="2.2"/><path d="M7.2 1.2L9.6 0.4 9 3.2Z" fill="#f0bb1c"/></g></svg>
<span class="t" id="t90" style="top:416.10px;font-size:12px;color:#111;font-weight:bold;left:984.40px;transform-origin:0 50%;transform:scaleX(0.9700);font-family:'Liberation Serif',serif;line-height:12px;height:12px;margin-top:-1px;">T</span>
<svg style="left:984px;top:435px" width="11" height="10" viewBox="0 0 11 10"><g transform="translate(0.500 0.300)"><path d="M0.6 1H6.4L8.4 2.6V4.2H2.6L0.6 2.6Z" fill="#fff" stroke="#2e3436" stroke-width="0.7"/><path d="M0.6 4H6.4L8.4 5.6V7.4H2.6L0.6 5.8Z" fill="#fff" stroke="#2e3436" stroke-width="0.7"/></g></svg>
<svg style="left:984px;top:453px" width="11" height="12" viewBox="0 0 11 12"><g transform="translate(0.200 0.600)"><rect x="0.5" y="0.5" width="8.6" height="8.6" fill="#fff" stroke="#2e3436" stroke-width="0.9"/><rect x="0.5" y="0.5" width="8.6" height="1.6" fill="#2e3436"/><path d="M3.6 4.2L2.4 5.6 3.6 7M6 4.2L7.2 5.6 6 7" stroke="#2e3436" stroke-width="0.7" fill="none"/></g></svg>
<svg style="left:984px;top:472px" width="11" height="11" viewBox="0 0 11 11"><g transform="translate(0.200 0.200)"><rect x="0.5" y="0.5" width="8.6" height="8.6" fill="#fff" stroke="#2e3436" stroke-width="0.9"/><rect x="0.5" y="0.5" width="8.6" height="1.4" fill="#6a9bd0"/><path d="M3.2 2V9M6.6 2V9" stroke="#2e3436" stroke-width="0.8"/></g></svg>
<svg style="left:987px;top:499px" width="5" height="7" viewBox="0 0 5 7"><g transform="translate(0.000 0.000)"><path d="M0 0V6L3.2 3.0Z" fill="#2e3436"/></g></svg>
<div class="tog" style="left:1003.00px;top:50.20px;width:19.00px;height:17.60px;"></div><svg style="left:1007px;top:54px" width="11" height="11" viewBox="0 0 11 11"><g transform="translate(0.900 0.700)"><path d="M1.6 1.6L7 6.6" stroke="#111" stroke-width="0.9"/><circle cx="1.7" cy="1.7" r="1.1" fill="#fff" stroke="#2b35e0" stroke-width="0.8"/><rect x="3.6" y="3.4" width="1.6" height="1.6" fill="#111" transform="rotate(45 4.4 4.2)"/><rect x="5.8" y="5.4" width="2.4" height="2.4" fill="#4caf50" stroke="#2c7a30" stroke-width="0.4" transform="rotate(45 7 6.6)"/></g></svg>
<div style="left:1003.00px;top:72.00px;width:19.00px;height:1.00px;background:#dedbd8"></div>
<svg style="left:1007px;top:80px" width="11" height="11" viewBox="0 0 11 11"><g transform="translate(0.900 0.700)"><path d="M1.6 1.6L7 6.6" stroke="#111" stroke-width="0.9"/><circle cx="1.7" cy="1.7" r="1.1" fill="#fff" stroke="#2b35e0" stroke-width="0.8"/><rect x="3.6" y="3.4" width="1.6" height="1.6" fill="#111" transform="rotate(45 4.4 4.2)"/><rect x="5.8" y="5.4" width="2.4" height="2.4" fill="#4caf50" stroke="#2c7a30" stroke-width="0.4" transform="rotate(45 7 6.6)"/></g></svg>
<svg style="left:1008px;top:99px" width="10" height="10" viewBox="0 0 10 10"><g transform="translate(0.400 0.300)"><path d="M0.6 6.6H6.4V0.8" stroke="#e3e1de" stroke-width="0.8" fill="none"/></g></svg>
<svg style="left:1008px;top:118px" width="10" height="10" viewBox="0 0 10 10"><g transform="translate(0.400 0.400)"><path d="M0.6 6.6H6.4V0.8" stroke="#e3e1de" stroke-width="0.8" fill="none"/></g></svg>
<svg style="left:1008px;top:136px" width="10" height="10" viewBox="0 0 10 10"><g transform="translate(0.400 0.800)"><path d="M0.6 6.6H6.4V0.8" stroke="#e3e1de" stroke-width="0.8" fill="none"/><circle cx="6.4" cy="3" r="0.9" fill="#e0e4e0"/></g></svg>
<svg style="left:1008px;top:155px" width="10" height="10" viewBox="0 0 10 10"><g transform="translate(0.400 0.400)"><path d="M0.6 6.6H6.4V0.8" stroke="#e3e1de" stroke-width="0.8" fill="none"/><rect x="2.4" y="2.6" width="1.6" height="1.6" fill="#cfe6cf"/></g></svg>
<div style="left:1003.00px;top:172.00px;width:19.00px;height:1.00px;background:#dedbd8"></div>
<div class="tog" style="left:1003.00px;top:177.20px;width:19.00px;height:17.60px;"></div><svg style="left:1007px;top:181px" width="11" height="11" viewBox="0 0 11 11"><g transform="translate(0.900 0.700)"><path d="M1.6 1.6L7 6.6" stroke="#111" stroke-width="0.9"/><circle cx="1.7" cy="1.7" r="1.1" fill="#fff" stroke="#2b35e0" stroke-width="0.8"/><rect x="3.6" y="3.4" width="1.6" height="1.6" fill="#111" transform="rotate(45 4.4 4.2)"/><rect x="5.8" y="5.4" width="2.4" height="2.4" fill="#4caf50" stroke="#2c7a30" stroke-width="0.4" transform="rotate(45 7 6.6)"/></g></svg>
<svg style="left:1007px;top:200px" width="11" height="11" viewBox="0 0 11 11"><g transform="translate(0.900 0.300)"><path d="M0.6 1Q6.6 1.4 6.8 7.6" stroke="#2e8a3a" stroke-width="1" fill="none"/><path d="M4.6 5.6L7 8.8 8.6 5.2" fill="none" stroke="#2e8a3a" stroke-width="0.9"/></g></svg>
<svg style="left:1007px;top:219px" width="11" height="10" viewBox="0 0 11 10"><g transform="translate(0.900 0.400)"><path d="M0.6 6.8L8.4 1.4M2.6 0.8L6.4 7.4" stroke="#444" stroke-width="0.7"/><rect x="3.5" y="3" width="2" height="2" fill="#4caf50" transform="rotate(45 4.5 4)"/></g></svg>
<div class="tog" style="left:1003.00px;top:233.20px;width:19.00px;height:17.60px;"></div><svg style="left:1007px;top:237px" width="11" height="11" viewBox="0 0 11 11"><g transform="translate(0.900 0.300)"><path d="M0.6 1Q6.6 1.4 6.8 8.4" stroke="#333" stroke-width="0.7" fill="none"/><rect x="4.8" y="5" width="2.4" height="2.4" fill="#4caf50" stroke="#2c7a30" stroke-width="0.4" transform="rotate(45 6 6.2)"/></g></svg>
<svg style="left:1007px;top:255px" width="11" height="11" viewBox="0 0 11 11"><g transform="translate(0.900 0.500)"><path d="M0.8 1.4Q5 1.6 6.6 5.2M5 5.6Q8 6.6 7.2 8.8" stroke="#444" stroke-width="0.7" fill="none"/><rect x="2.6" y="1.8" width="2.2" height="2.2" fill="#4caf50" stroke="#2c7a30" stroke-width="0.4" transform="rotate(45 3.7 2.9)"/></g></svg>
<svg style="left:1007px;top:274px" width="11" height="11" viewBox="0 0 11 11"><g transform="translate(0.900 0.500)"><path d="M1 8L8 1" stroke="#d42a2a" stroke-width="1.3"/><rect x="5.6" y="1.4" width="2" height="2" fill="#4caf50" transform="rotate(45 6.6 2.4)"/><rect x="2" y="5.2" width="2" height="2" fill="#4caf50" transform="rotate(45 3 6.2)"/></g></svg>
<div style="left:1003.00px;top:292.00px;width:19.00px;height:1.00px;background:#dedbd8"></div>
<div class="tog" style="left:1003.00px;top:296.60px;width:19.00px;height:17.60px;"></div><svg style="left:1007px;top:301px" width="11" height="10" viewBox="0 0 11 10"><g transform="translate(0.900 0.100)"><path d="M1.6 1.6L7 6.6" stroke="#111" stroke-width="0.9"/><circle cx="1.7" cy="1.7" r="1.1" fill="#fff" stroke="#2b35e0" stroke-width="0.8"/><rect x="3.6" y="3.4" width="1.6" height="1.6" fill="#111" transform="rotate(45 4.4 4.2)"/><rect x="5.8" y="5.4" width="2.4" height="2.4" fill="#4caf50" stroke="#2c7a30" stroke-width="0.4" transform="rotate(45 7 6.6)"/></g></svg>
<svg style="left:1008px;top:319px" width="10" height="9" viewBox="0 0 10 9"><g transform="translate(0.400 0.000)"><path d="M0.6 7H7V0.8" stroke="#c8c8c8" stroke-width="0.7" fill="none"/><rect x="1.8" y="2.6" width="1.8" height="1.8" fill="#4caf50"/></g></svg>
<svg style="left:1008px;top:338px" width="10" height="10" viewBox="0 0 10 10"><g transform="translate(0.400 0.300)"><path d="M0.6 7H7V0.8" stroke="#b8b8b8" stroke-width="0.7" fill="none" stroke-dasharray="1.4 0.8"/><path d="M1 3.6H4M2.5 2.1V5.1" stroke="#444" stroke-width="0.7"/><rect x="5" y="3" width="1.4" height="1.4" fill="#4caf50"/></g></svg>
<span class="t" id="t91" style="top:355.70px;font-size:10.6px;color:#111;font-weight:bold;left:1008.30px;transform-origin:0 50%;transform:scaleX(1.1200);line-height:12px;height:12px;margin-top:-1.4px;-webkit-text-stroke:0.5px #111;">A</span>
<div style="left:1007.60px;top:363.40px;width:2.00px;height:1.80px;background:#4caf50;transform:rotate(45deg)"></div>
<div style="left:1003.00px;top:374.00px;width:19.00px;height:1.00px;background:#dedbd8"></div>
<svg style="left:1008px;top:383px" width="9" height="10" viewBox="0 0 9 10"><g transform="translate(0.900 0.300)"><rect x="0.6" y="0.6" width="5.4" height="7" fill="#fdfdfd" stroke="#555" stroke-width="0.7"/><path d="M6.3 1.4V8H1.4" stroke="#999" stroke-width="0.8" fill="none"/></g></svg>
<div class="tog" style="left:1003.00px;top:397.20px;width:19.00px;height:17.00px;"></div>
<svg style="left:1007px;top:401px" width="11" height="10" viewBox="0 0 11 10"><g transform="translate(0.900 0.800)"><path d="M0.4 1H8.6M0.4 3H8.6M0.4 5H8.6M0.4 7H8.6M1.2 0.2V7.8M3.4 0.2V7.8M5.6 0.2V7.8M7.8 0.2V7.8" stroke="#2b35e0" stroke-width="0.9"/></g></svg>
<div class="tog" style="left:1003.00px;top:416.20px;width:19.00px;height:17.20px;"></div>
<svg style="left:1008px;top:420px" width="10" height="10" viewBox="0 0 10 10"><g transform="translate(0.400 0.800)"><path d="M1 0.4V7.6M7 0.4V7.6M6 0.8L2.8 7.4" stroke="#2b35e0" stroke-width="0.9"/></g></svg>
<div style="left:0.00px;top:512.90px;width:12.00px;height:10.30px;background:#fff"></div>
<svg style="left:0px;top:512px" width="1006" height="13" viewBox="0 0 1006 13"><g transform="translate(0.000 0.850)"><rect x="10.80" y="0" width="10.88" height="10.2" fill="#000000"/><rect x="20.93" y="0" width="10.88" height="10.2" fill="#1a1a1a"/><rect x="31.07" y="0" width="10.88" height="10.2" fill="#333333"/><rect x="41.20" y="0" width="10.88" height="10.2" fill="#4d4d4d"/><rect x="51.33" y="0" width="10.88" height="10.2" fill="#666666"/><rect x="61.46" y="0" width="10.88" height="10.2" fill="#808080"/><rect x="71.60" y="0" width="10.88" height="10.2" fill="#999999"/><rect x="81.73" y="0" width="10.88" height="10.2" fill="#b3b3b3"/><rect x="91.86" y="0" width="10.88" height="10.2" fill="#cccccc"/><rect x="102.00" y="0" width="10.88" height="10.2" fill="#e6e6e6"/><rect x="112.13" y="0" width="10.88" height="10.2" fill="#ececec"/><rect x="122.26" y="0" width="10.88" height="10.2" fill="#f2f2f2"/><rect x="132.40" y="0" width="10.88" height="10.2" fill="#f9f9f9"/><rect x="142.53" y="0" width="10.88" height="10.2" fill="#ffffff"/><rect x="152.66" y="0" width="10.88" height="10.2" fill="#800000"/><rect x="162.79" y="0" width="10.88" height="10.2" fill="#ff0000"/><rect x="172.93" y="0" width="10.88" height="10.2" fill="#808000"/><rect x="183.06" y="0" width="10.88" height="10.2" fill="#ffff00"/><rect x="193.19" y="0" width="10.88" height="10.2" fill="#008000"/><rect x="203.33" y="0" width="10.88" height="10.2" fill="#00ff00"/><rect x="213.46" y="0" width="10.88" height="10.2" fill="#008080"/><rect x="223.59" y="0" width="10.88" height="10.2" fill="#00ffff"/><rect x="233.73" y="0" width="10.88" height="10.2" fill="#000080"/><rect x="243.86" y="0" width="10.88" height="10.2" fill="#0000ff"/><rect x="253.99" y="0" width="10.88" height="10.2" fill="#800080"/><rect x="264.12" y="0" width="10.88" height="10.2" fill="#ff00ff"/><rect x="274.26" y="0" width="10.88" height="10.2" fill="#2b0000"/><rect x="284.39" y="0" width="10.88" height="10.2" fill="#550000"/><rect x="294.52" y="0" width="10.88" height="10.2" fill="#800000"/><rect x="304.66" y="0" width="10.88" height="10.2" fill="#aa0000"/><rect x="314.79" y="0" width="10.88" height="10.2" fill="#d40000"/><rect x="324.92" y="0" width="10.88" height="10.2" fill="#ff0000"/><rect x="335.06" y="0" width="10.88" height="10.2" fill="#ff2a2a"/><rect x="345.19" y="0" width="10.88" height="10.2" fill="#ff5555"/><rect x="355.32" y="0" width="10.88" height="10.2" fill="#ff8080"/><rect x="365.45" y="0" width="10.88" height="10.2" fill="#ffaaaa"/><rect x="375.59" y="0" width="10.88" height="10.2" fill="#ffd5d5"/><rect x="385.72" y="0" width="10.88" height="10.2" fill="#280b0b"/><rect x="395.85" y="0" width="10.88" height="10.2" fill="#501616"/><rect x="405.99" y="0" width="10.88" height="10.2" fill="#782121"/><rect x="416.12" y="0" width="10.88" height="10.2" fill="#a02c2c"/><rect x="426.25" y="0" width="10.88" height="10.2" fill="#c83737"/><rect x="436.39" y="0" width="10.88" height="10.2" fill="#d35f5f"/><rect x="446.52" y="0" width="10.88" height="10.2" fill="#de8787"/><rect x="456.65" y="0" width="10.88" height="10.2" fill="#e9afaf"/><rect x="466.78" y="0" width="10.88" height="10.2" fill="#f4d7d7"/><rect x="476.92" y="0" width="10.88" height="10.2" fill="#241c1c"/><rect x="487.05" y="0" width="10.88" height="10.2" fill="#483737"/><rect x="497.18" y="0" width="10.88" height="10.2" fill="#6c5353"/><rect x="507.32" y="0" width="10.88" height="10.2" fill="#916f6f"/><rect x="517.45" y="0" width="10.88" height="10.2" fill="#ac9393"/><rect x="527.58" y="0" width="10.88" height="10.2" fill="#c8b7b7"/><rect x="537.72" y="0" width="10.88" height="10.2" fill="#e3dbdb"/><rect x="547.85" y="0" width="10.88" height="10.2" fill="#2b1100"/><rect x="557.98" y="0" width="10.88" height="10.2" fill="#552200"/><rect x="568.11" y="0" width="10.88" height="10.2" fill="#803300"/><rect x="578.25" y="0" width="10.88" height="10.2" fill="#aa4400"/><rect x="588.38" y="0" width="10.88" height="10.2" fill="#d45500"/><rect x="598.51" y="0" width="10.88" height="10.2" fill="#ff6600"/><rect x="608.65" y="0" width="10.88" height="10.2" fill="#ff7f2a"/><rect x="618.78" y="0" width="10.88" height="10.2" fill="#ff9955"/><rect x="628.91" y="0" width="10.88" height="10.2" fill="#ffb380"/><rect x="639.05" y="0" width="10.88" height="10.2" fill="#ffccaa"/><rect x="649.18" y="0" width="10.88" height="10.2" fill="#ffe6d5"/><rect x="659.31" y="0" width="10.88" height="10.2" fill="#28170b"/><rect x="669.44" y="0" width="10.88" height="10.2" fill="#502d16"/><rect x="679.58" y="0" width="10.88" height="10.2" fill="#784421"/><rect x="689.71" y="0" width="10.88" height="10.2" fill="#a05a2c"/><rect x="699.84" y="0" width="10.88" height="10.2" fill="#c87137"/><rect x="709.98" y="0" width="10.88" height="10.2" fill="#d38d5f"/><rect x="720.11" y="0" width="10.88" height="10.2" fill="#deaa87"/><rect x="730.24" y="0" width="10.88" height="10.2" fill="#e9c6af"/><rect x="740.38" y="0" width="10.88" height="10.2" fill="#f4e3d7"/><rect x="750.51" y="0" width="10.88" height="10.2" fill="#241f1c"/><rect x="760.64" y="0" width="10.88" height="10.2" fill="#483e37"/><rect x="770.77" y="0" width="10.88" height="10.2" fill="#6c5d53"/><rect x="780.91" y="0" width="10.88" height="10.2" fill="#917c6f"/><rect x="791.04" y="0" width="10.88" height="10.2" fill="#ac9d93"/><rect x="801.17" y="0" width="10.88" height="10.2" fill="#c8beb7"/><rect x="811.31" y="0" width="10.88" height="10.2" fill="#e3dedb"/><rect x="821.44" y="0" width="10.88" height="10.2" fill="#2b2200"/><rect x="831.57" y="0" width="10.88" height="10.2" fill="#554400"/><rect x="841.71" y="0" width="10.88" height="10.2" fill="#806600"/><rect x="851.84" y="0" width="10.88" height="10.2" fill="#aa8800"/><rect x="861.97" y="0" width="10.88" height="10.2" fill="#d4aa00"/><rect x="872.10" y="0" width="10.88" height="10.2" fill="#ffcc00"/><rect x="882.24" y="0" width="10.88" height="10.2" fill="#ffd42a"/><rect x="892.37" y="0" width="10.88" height="10.2" fill="#ffdd55"/><rect x="902.50" y="0" width="10.88" height="10.2" fill="#ffe680"/><rect x="912.64" y="0" width="10.88" height="10.2" fill="#ffeeaa"/><rect x="922.77" y="0" width="10.88" height="10.2" fill="#fff6d5"/><rect x="932.90" y="0" width="10.88" height="10.2" fill="#28220b"/><rect x="943.04" y="0" width="10.88" height="10.2" fill="#504416"/><rect x="953.17" y="0" width="10.88" height="10.2" fill="#786721"/><rect x="963.30" y="0" width="10.88" height="10.2" fill="#a0892c"/><rect x="973.43" y="0" width="10.88" height="10.2" fill="#c8ab37"/><rect x="983.57" y="0" width="10.88" height="10.2" fill="#d3bc5f"/><rect x="993.70" y="0" width="10.45" height="10.2" fill="#decd87"/></g></svg>
<svg style="left:0px;top:512px" width="12" height="13" viewBox="0 0 12 13"><g transform="translate(0.000 0.900)"><rect width="10.8" height="10.2" fill="#fff"/><path d="M0.6 0.4L10.4 9.8M10.4 0.4L0.6 9.8" stroke="#8a1c1c" stroke-width="0.9"/></g></svg>
<div style="left:0.00px;top:523.05px;width:1004.10px;height:7.80px;background:#cfcfcf"></div>
<div style="left:1.70px;top:525.30px;width:226.70px;height:4.40px;background:#8b8e8f;border-radius:2.2px"></div>
<svg style="left:1012px;top:519px" width="5" height="7" viewBox="0 0 5 7"><g transform="translate(0.400 0.000)"><path d="M3.2 0V6L0 3.0Z" fill="#2e3436"/></g></svg>
<span class="t" id="t92" style="top:531.90px;font-size:6.4px;color:#4a5053;right:1003.80px;transform-origin:100% 50%;transform:scaleX(0.9645);">Fill:</span>
<span class="t" id="t93" style="top:541.00px;font-size:6.4px;color:#4a5053;right:1003.80px;transform-origin:100% 50%;transform:scaleX(0.9383);">Stroke:</span>
<span class="t" id="t94" style="top:531.90px;font-size:6.4px;color:#2e3436;font-weight:bold;left:33.60px;transform-origin:0 50%;transform:scaleX(0.9513);">Unset</span>
<span class="t" id="t95" style="top:541.00px;font-size:6.4px;color:#2e3436;font-weight:bold;left:33.60px;transform-origin:0 50%;transform:scaleX(0.9513);">Unset</span>
<span class="t" id="t96" style="top:541.10px;font-size:6.4px;color:#4a5053;left:59.00px;transform-origin:0 50%;transform:scaleX(0.9404);">0.0111</span>
<span class="t" id="t97" style="top:536.10px;font-size:6.4px;color:#4a5053;left:79.00px;transform-origin:0 50%;transform:scaleX(0.8889);">O:</span>
<div class="fld" style="left:86.70px;top:532.20px;width:35.50px;height:19.00px;"></div><span class="t" id="t98" style="top:536.00px;font-size:6.4px;color:#2e3436;left:88.50px;transform-origin:0 50%;transform:scaleX(0.8621);">100</span><div style="left:103.00px;top:532.80px;width:1.00px;height:17.80px;background:#f1efed"></div><div style="left:113.00px;top:532.80px;width:1.00px;height:17.80px;background:#f1efed"></div><div style="left:104.40px;top:540.00px;width:8.10px;height:1.00px;background:#2e3436"></div><div style="left:115.00px;top:540.00px;width:6.20px;height:1.00px;background:#d5d2cf"></div><div style="left:118.00px;top:537.40px;width:1.00px;height:6.20px;background:#d5d2cf"></div>
<div style="left:133.00px;top:532.50px;width:1.00px;height:17.50px;background:#dedbd8"></div>
<svg style="left:139px;top:536px" width="11" height="10" viewBox="0 0 11 10"><g transform="translate(0.400 0.200)"><ellipse cx="4.5" cy="4.8" rx="3.6" ry="2.4" fill="#fff" stroke="#222" stroke-width="0.9"/><circle cx="4.5" cy="4.8" r="1.6" fill="#222"/><path d="M1.4 2.6L0.8 1.4M3 1.8L2.8 0.4M5 1.6V0.2M6.6 2L7.2 0.8" stroke="#222" stroke-width="0.7"/></g></svg>
<svg style="left:159px;top:535px" width="9" height="12" viewBox="0 0 9 12"><g transform="translate(0.600 0.600)"><path d="M1.6 4.4V2.6Q1.6 0.6 3.4 0.6Q5.2 0.6 5.2 2.2" fill="none" stroke="#3a3f41" stroke-width="0.9"/><rect x="0.8" y="4.4" width="5.6" height="4.8" rx="0.6" fill="#f0d060" stroke="#3a3f41" stroke-width="0.8"/></g></svg>
<div class="btn" style="left:173.40px;top:532.20px;width:41.00px;height:19.00px;"></div>
<span class="t" id="t99" style="top:536.30px;font-size:5.6px;color:#2e3436;font-weight:bold;left:179.70px;transform-origin:0 50%;transform:scaleX(0.9183);">•Layer 1</span>
<svg style="left:202px;top:539px" width="8" height="5" viewBox="0 0 8 5"><g transform="translate(0.300 0.400)"><path d="M0 0H6L3.0 3.2Z" fill="#2e3436"/></g></svg>
<span class="t" id="t100" style="top:536.30px;font-size:6.4px;color:#4a5053;left:215.60px;transform-origin:0 50%;transform:scaleX(1.0073);">Print document</span>
<div style="left:856.00px;top:532.50px;width:1.00px;height:17.50px;background:#dedbd8"></div>
<span class="t" id="t101" style="top:531.80px;font-size:6.4px;color:#4a5053;left:861.90px;transform-origin:0 50%;transform:scaleX(0.8269);">X:</span>
<span class="t" id="t102" style="top:540.80px;font-size:6.4px;color:#4a5053;left:861.90px;transform-origin:0 50%;transform:scaleX(0.8791);">Y:</span>
<span class="t" id="t103" style="top:531.80px;font-size:6.4px;color:#4a5053;right:134.40px;transform-origin:100% 50%;transform:scaleX(0.9466);">-7.31</span>
<span class="t" id="t104" style="top:540.80px;font-size:6.4px;color:#4a5053;right:134.40px;transform-origin:100% 50%;transform:scaleX(0.9466);">-0.60</span>
<span class="t" id="t105" style="top:536.10px;font-size:6.4px;color:#4a5053;left:895.00px;transform-origin:0 50%;transform:scaleX(0.9846);">Z:</span>
<div class="fld" style="left:905.70px;top:532.40px;width:46.60px;height:19.00px;"></div><span class="t" id="t106" style="top:536.00px;font-size:6.4px;color:#2e3436;left:911.20px;transform-origin:0 50%;transform:scaleX(0.9221);">45%</span><div style="left:929.00px;top:533.00px;width:1.00px;height:17.80px;background:#f1efed"></div><div style="left:939.00px;top:533.00px;width:1.00px;height:17.80px;background:#f1efed"></div><div style="left:930.20px;top:540.00px;width:7.80px;height:1.00px;background:#2e3436"></div><div style="left:941.80px;top:540.00px;width:7.20px;height:1.00px;background:#2e3436"></div><div style="left:945.00px;top:536.90px;width:1.00px;height:7.20px;background:#2e3436"></div>
<span class="t" id="t107" style="top:536.10px;font-size:6.4px;color:#4a5053;left:957.60px;transform-origin:0 50%;transform:scaleX(0.8898);">R:</span>
<div class="fld" style="left:968.40px;top:532.40px;width:49.80px;height:19.00px;"></div><span class="t" id="t108" style="top:536.00px;font-size:6.4px;color:#2e3436;left:975.70px;transform-origin:0 50%;transform:scaleX(0.9333);">0.00°</span><div style="left:995.00px;top:533.00px;width:1.00px;height:17.80px;background:#f1efed"></div><div style="left:1006.00px;top:533.00px;width:1.00px;height:17.80px;background:#f1efed"></div><div style="left:996.50px;top:540.00px;width:7.50px;height:1.00px;background:#2e3436"></div><div style="left:1008.00px;top:540.00px;width:7.50px;height:1.00px;background:#2e3436"></div><div style="left:1011.00px;top:536.75px;width:1.00px;height:7.50px;background:#2e3436"></div>
<div style="left:0.00px;top:25.40px;width:145.60px;height:215.40px;background:#fff;border:0.7px solid #cfcac5;border-left:none;box-shadow:0 1px 2px rgba(0,0,0,.12)"></div>
<div class="hl" style="left:0.00px;top:173.10px;width:145.30px;height:13.50px;"></div>
<span class="t" id="t109" style="top:27.70px;font-size:6.4px;color:#2e3436;left:16.70px;transform-origin:0 50%;transform:scaleX(0.9768);">New</span>
<span class="t" id="t110" style="top:27.70px;font-size:6.4px;color:#9a9996;right:884.00px;transform-origin:100% 50%;transform:scaleX(0.9838);">Ctrl+N</span>
<span class="t" id="t111" style="top:41.00px;font-size:6.4px;color:#2e3436;left:16.70px;transform-origin:0 50%;transform:scaleX(0.9823);">New from Template...</span>
<span class="t" id="t112" style="top:41.00px;font-size:6.4px;color:#9a9996;right:884.00px;transform-origin:100% 50%;transform:scaleX(1.0175);">Ctrl+Alt+N</span>
<span class="t" id="t113" style="top:54.30px;font-size:6.4px;color:#2e3436;left:16.70px;transform-origin:0 50%;transform:scaleX(0.9538);">Open...</span>
<span class="t" id="t114" style="top:54.30px;font-size:6.4px;color:#9a9996;right:884.00px;transform-origin:100% 50%;transform:scaleX(0.9648);">Ctrl+O</span>
<span class="t" id="t115" style="top:67.60px;font-size:6.4px;color:#2e3436;left:16.70px;transform-origin:0 50%;transform:scaleX(0.9609);">Open Recent</span>
<span class="t" id="t116" style="top:80.90px;font-size:6.4px;color:#2e3436;left:16.70px;transform-origin:0 50%;transform:scaleX(0.9135);">Revert</span>
<span class="t" id="t117" style="top:94.20px;font-size:6.4px;color:#2e3436;left:16.70px;transform-origin:0 50%;transform:scaleX(0.8369);">Save</span>
<span class="t" id="t118" style="top:94.20px;font-size:6.4px;color:#9a9996;right:884.00px;transform-origin:100% 50%;transform:scaleX(0.9143);">Ctrl+S</span>
<span class="t" id="t119" style="top:107.60px;font-size:6.4px;color:#2e3436;left:16.70px;transform-origin:0 50%;transform:scaleX(0.8964);">Save As...</span>
<span class="t" id="t120" style="top:107.60px;font-size:6.4px;color:#9a9996;right:884.00px;transform-origin:100% 50%;transform:scaleX(0.9868);">Shift+Ctrl+S</span>
<span class="t" id="t121" style="top:120.90px;font-size:6.4px;color:#2e3436;left:16.70px;transform-origin:0 50%;transform:scaleX(0.9239);">Save a Copy...</span>
<span class="t" id="t122" style="top:120.90px;font-size:6.4px;color:#9a9996;right:884.00px;transform-origin:100% 50%;transform:scaleX(1.0119);">Shift+Ctrl+Alt+S</span>
<span class="t" id="t123" style="top:134.20px;font-size:6.4px;color:#2e3436;left:16.70px;transform-origin:0 50%;transform:scaleX(0.9266);">Save Template...</span>
<span class="t" id="t124" style="top:148.30px;font-size:6.4px;color:#2e3436;left:16.70px;transform-origin:0 50%;transform:scaleX(1.0020);">Import...</span>
<span class="t" id="t125" style="top:148.30px;font-size:6.4px;color:#9a9996;right:884.00px;transform-origin:100% 50%;transform:scaleX(0.9901);">Ctrl+I</span>
<span class="t" id="t126" style="top:161.60px;font-size:6.4px;color:#2e3436;left:16.70px;transform-origin:0 50%;transform:scaleX(0.9429);">Export PNG Image...</span>
<span class="t" id="t127" style="top:161.60px;font-size:6.4px;color:#9a9996;right:884.00px;transform-origin:100% 50%;transform:scaleX(0.9868);">Shift+Ctrl+E</span>
<span class="t" id="t128" style="top:175.30px;font-size:6.4px;color:#fff;left:16.70px;transform-origin:0 50%;transform:scaleX(0.9746);">Print...</span>
<span class="t" id="t129" style="top:175.30px;font-size:6.4px;color:#dbe8fa;right:884.00px;transform-origin:100% 50%;transform:scaleX(0.9422);">Ctrl+P</span>
<span class="t" id="t130" style="top:189.10px;font-size:6.4px;color:#2e3436;left:16.70px;transform-origin:0 50%;transform:scaleX(0.9696);">Clean Up Document</span>
<span class="t" id="t131" style="top:202.90px;font-size:6.4px;color:#2e3436;left:16.70px;transform-origin:0 50%;transform:scaleX(0.9731);">Document Properties...</span>
<span class="t" id="t132" style="top:202.90px;font-size:6.4px;color:#9a9996;right:884.00px;transform-origin:100% 50%;transform:scaleX(1.0054);">Shift+Ctrl+D</span>
<span class="t" id="t133" style="top:216.80px;font-size:6.4px;color:#2e3436;left:16.70px;transform-origin:0 50%;transform:scaleX(0.8933);">Close</span>
<span class="t" id="t134" style="top:216.80px;font-size:6.4px;color:#9a9996;right:884.00px;transform-origin:100% 50%;transform:scaleX(0.9948);">Ctrl+W</span>
<span class="t" id="t135" style="top:230.10px;font-size:6.4px;color:#2e3436;left:16.70px;transform-origin:0 50%;transform:scaleX(1.0226);">Quit</span>
<span class="t" id="t136" style="top:230.10px;font-size:6.4px;color:#9a9996;right:884.00px;transform-origin:100% 50%;transform:scaleX(0.9863);">Ctrl+Q</span>
<svg style="left:135px;top:68px" width="6" height="9" viewBox="0 0 6 9"><g transform="translate(0.600 0.900)"><path d="M0 0V6.4L3.4 3.2Z" fill="#2e3436"/></g></svg>
<div style="left:0.00px;top:145.00px;width:145.30px;height:1.00px;background:#e2dfdc"></div>
<div style="left:0.00px;top:200.00px;width:145.30px;height:1.00px;background:#e2dfdc"></div>
<div style="left:0.00px;top:214.00px;width:145.30px;height:1.00px;background:#e2dfdc"></div>
<svg style="left:0px;top:23px" width="19" height="5" viewBox="0 0 19 5"><g transform="translate(0.000 0.800)"><rect width="18" height="2.2" fill="#3584e4"/></g></svg>
</div>
</body></html>
